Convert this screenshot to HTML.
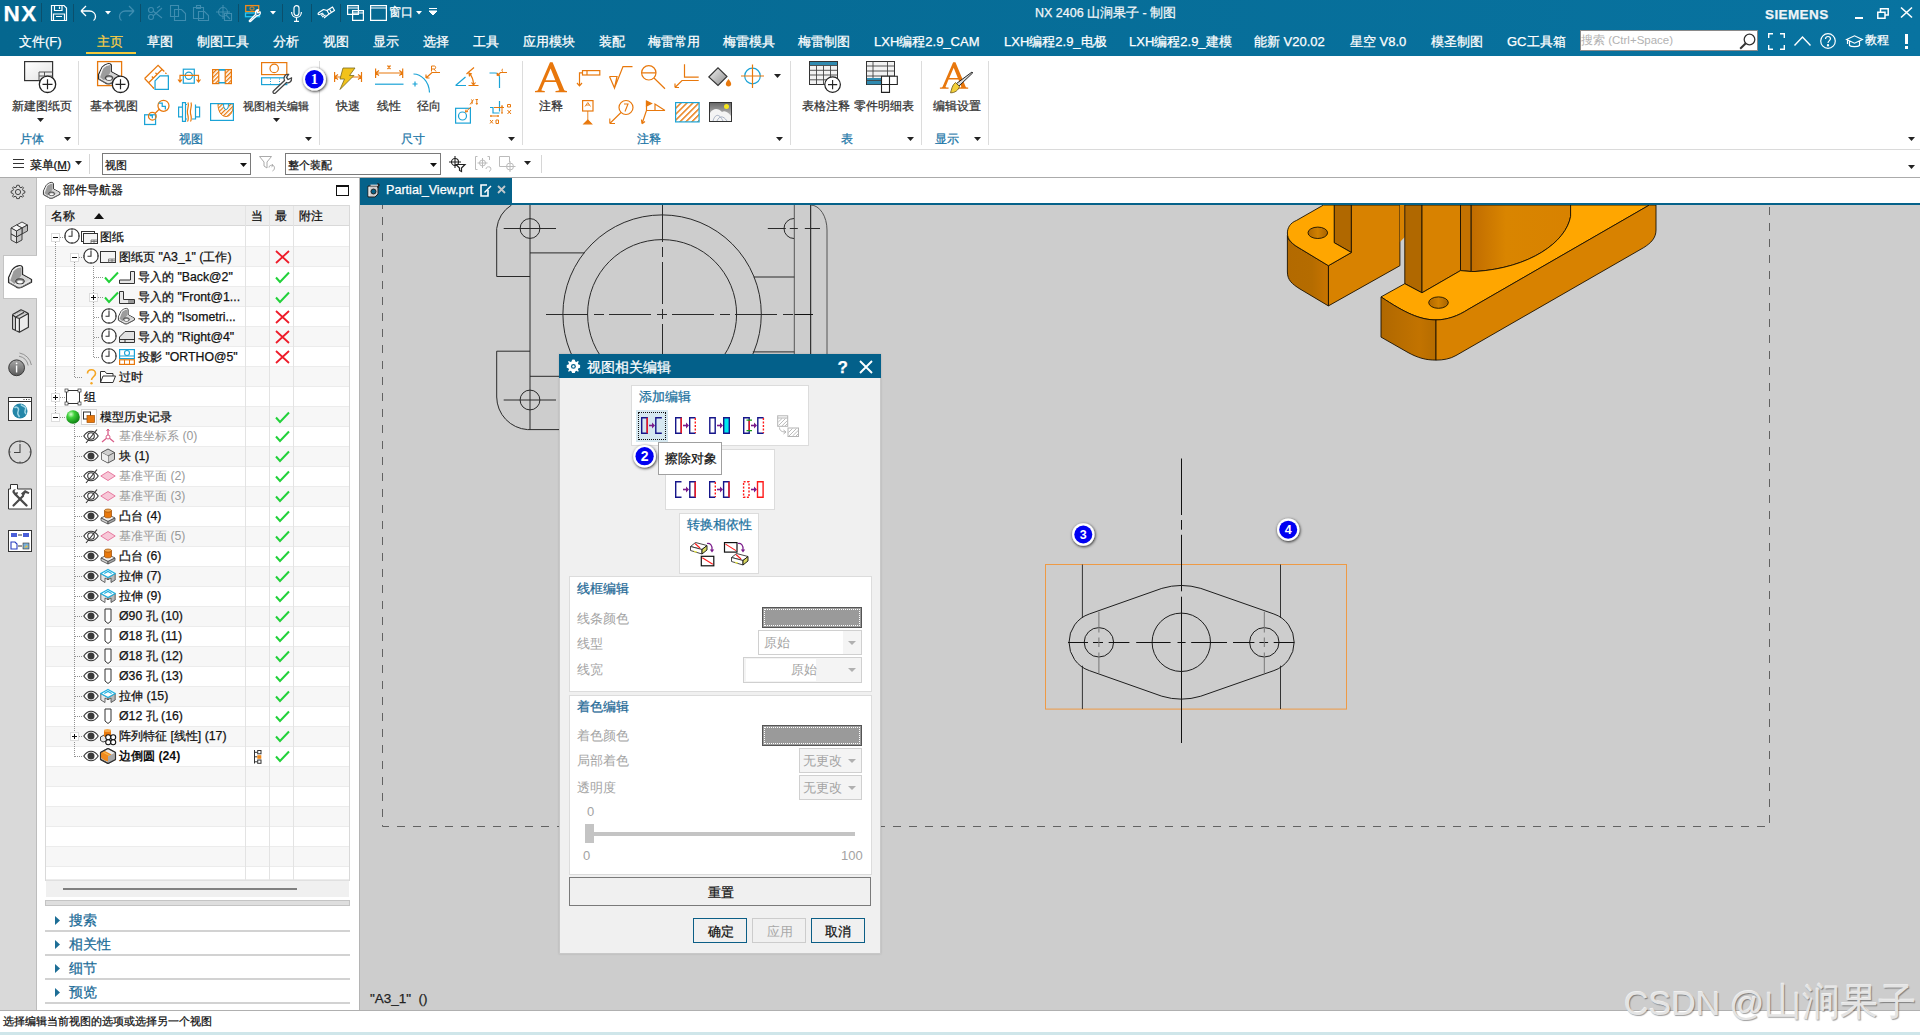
<!DOCTYPE html>
<html><head><meta charset="utf-8">
<style>
*{box-sizing:border-box;margin:0;padding:0}
html,body{width:1920px;height:1035px;overflow:hidden}
body{position:relative;font-family:"Liberation Sans",sans-serif;font-size:12px;color:#222;background:#fff;-webkit-text-stroke:0.25px currentColor}
.a{position:absolute}
.w{color:#fff}
svg{position:absolute;overflow:visible}
#hdr{left:0;top:0;width:1920px;height:56px;background:linear-gradient(90deg,#05678f,#0873a0)}
.mi{position:absolute;top:33.5px;font-size:13px;color:#fff;white-space:nowrap;line-height:16px}
#ribbon{left:0;top:56px;width:1920px;height:94px;background:#fff;border-bottom:1px solid #dadada}
.rl{position:absolute;font-size:12px;color:#333;white-space:nowrap;line-height:14px}
.gl{position:absolute;top:132px;font-size:12px;color:#1f78a8;white-space:nowrap;line-height:14px}
.sep{position:absolute;width:1px;background:#dcdcdc}
#tb{left:0;top:150px;width:1920px;height:28px;background:#fff;border-bottom:1px solid #a8a8a8}
#strip{left:0;top:178px;width:37px;height:832px;background:#d9d9d9;border-right:1px solid #bdbdbd}
#nav{left:37px;top:178px;width:323px;height:832px;background:#fff;border-right:1px solid #b4b4b4}
#gfx{left:360px;top:205px;width:1560px;height:805px;background:#cdcdcd}
#tabbar{left:360px;top:178px;width:1560px;height:27px;background:#fff;border-bottom:2px solid #05658d}
#status{left:0;top:1010px;width:1920px;height:25px;background:#fff;border-top:1px solid #b0b0b0}
.row{position:absolute;left:46px;width:304px;height:20px;border-bottom:1px solid #e8e8e8}
.row.alt{background:#f7f7f7}
.rt{position:absolute;font-size:12.3px;color:#111;white-space:nowrap;line-height:14px}
.rt.g{color:#999}
</style></head><body>

<div id="hdr" class="a">
<div class="a w" style="left:3.5px;top:1.3px;font-size:22.5px;font-weight:bold;line-height:25px;letter-spacing:1.6px">NX</div>
<div class="a" style="left:41px;top:3px;width:1px;height:19px;background:#0b4f6c"></div>
<svg style="left:51px;top:5px" width="16" height="16" viewBox="0 0 16 16"><path d="M0.5 0.5H13L15.5 3V15.5H0.5Z M3.5 0.5V5.5H11V0.5 M8.5 1.5V4 M2.5 15.5V9H13.5V15.5 M5 11.5H11" fill="none" stroke="#fff" stroke-width="1.2"/></svg>
<div class="a" style="left:73px;top:4px;width:1px;height:18px;background:#0b4f6c"></div>
<svg style="left:80px;top:5px" width="17" height="16" viewBox="0 0 17 16"><path d="M1 6L6 1 M1 6L6 11 M1 6H9.5C13 6 15.5 8.5 15.5 11.5C15.5 13 15 14.5 13.5 15.5" fill="none" stroke="#fff" stroke-width="1.3"/></svg>
<svg style="left:105px;top:11px" width="6" height="4"><path d="M0 0H6L3 3.5Z" fill="#fff"/></svg>
<svg style="left:118px;top:5px" width="17" height="16" viewBox="0 0 17 16"><path d="M16 6L11 1 M16 6L11 11 M16 6H7.5C4 6 1.5 8.5 1.5 11.5C1.5 13 2 14.5 3.5 15.5" fill="none" stroke="#3f8db0" stroke-width="1.3"/></svg>
<div class="a" style="left:140px;top:4px;width:1px;height:18px;background:#0b4f6c"></div>
<svg style="left:147px;top:5px" width="16" height="16" viewBox="0 0 16 16" fill="none" stroke="#3f8db0" stroke-width="1.1"><circle cx="4" cy="12" r="2.5"/><circle cx="4" cy="5" r="2.5"/><path d="M6 11L15 3 M6 6L15 13 M10 3L13 1"/></svg>
<svg style="left:170px;top:5px" width="16" height="16" viewBox="0 0 16 16" fill="none" stroke="#3f8db0" stroke-width="1.1"><path d="M0.5 0.5H8.5V11.5H0.5Z M4.5 4.5H11.5L15.5 8.5V15.5H4.5Z"/></svg>
<svg style="left:193px;top:5px" width="16" height="16" viewBox="0 0 16 16" fill="none" stroke="#3f8db0" stroke-width="1.1"><path d="M0.5 2.5H10.5V13.5H0.5Z M3.5 0.5H7.5V3.5H3.5Z M5.5 6.5H11.5L15.5 10.5V15.5H5.5Z"/></svg>
<svg style="left:216px;top:5px" width="16" height="16" viewBox="0 0 16 16" fill="none" stroke="#3f8db0" stroke-width="1.1"><circle cx="7" cy="7" r="4.5"/><path d="M7 0V14 M0 7H14 M8.5 8.5H15.5V15.5H8.5Z M10 10L14 14"/></svg>
<div class="a" style="left:238px;top:4px;width:1px;height:18px;background:#0b4f6c"></div>
<svg style="left:245px;top:5px" width="17" height="17" viewBox="0 0 17 17"><rect x="0.7" y="0.6" width="13" height="6" fill="none" stroke="#f08a1c" stroke-width="1.3"/><rect x="5" y="2" width="4" height="3" rx="1" fill="none" stroke="#f08a1c" stroke-width="1"/><rect x="0.5" y="8" width="14" height="3.7" fill="none" stroke="#25c8f5" stroke-width="1.3"/><path d="M4.5 15.5L11 9C10 7 11 4.5 13.5 4.8L12 6.8L13 8L15 6.8C16 9 14 11 12 10.5L5.5 16.5C4.8 17 3.8 16.3 4.5 15.5Z" fill="#07699a" stroke="#fff" stroke-width="1.3" stroke-linejoin="round"/></svg>
<svg style="left:270px;top:11px" width="6" height="4"><path d="M0 0H6L3 3.5Z" fill="#fff"/></svg>
<div class="a" style="left:282px;top:4px;width:1px;height:18px;background:#0b4f6c"></div>
<svg style="left:291px;top:5px" width="11" height="17" viewBox="0 0 11 17" fill="none" stroke="#fff" stroke-width="1.2"><rect x="3" y="0.6" width="5" height="10" rx="2.5"/><path d="M0.6 7C0.6 10 2.6 12.5 5.5 12.5C8.4 12.5 10.4 10 10.4 7 M5.5 12.5V16 M3 16.3H8"/></svg>
<div class="a" style="left:311px;top:4px;width:1px;height:18px;background:#0b4f6c"></div>
<svg style="left:317px;top:6px" width="18" height="13" viewBox="0 0 18 13" fill="none" stroke="#fff" stroke-width="1.2" stroke-linejoin="round"><path d="M10 4.5L15.5 1L17.5 4.5L12 8Z"/><path d="M12.5 3.2L14.5 6.5"/><path d="M10 4.5L6.5 3.5L2 6.5C0.5 7.5 1 9 2.5 8.5L6 7 M4 9.5L7 8 M5 11L8.5 9 M7 12L12 8"/></svg>
<div class="a" style="left:340px;top:4px;width:1px;height:18px;background:#0b4f6c"></div>
<svg style="left:347px;top:5px" width="17" height="16" viewBox="0 0 17 16" fill="none" stroke="#fff" stroke-width="1.2"><path d="M0.6 0.6H11.4V9.4H0.6Z M0.6 3H11.4 M5.6 5.6H16.4V15.4H5.6Z M5.6 8H16.4"/></svg>
<svg style="left:370px;top:5px" width="17" height="16" viewBox="0 0 17 16" fill="none" stroke="#fff" stroke-width="1.2"><path d="M0.6 0.6H16.4V15.4H0.6Z M0.6 3H16.4"/></svg>
<div class="a w" style="left:389px;top:5px;font-size:12px;line-height:15px">窗口</div>
<svg style="left:416px;top:11px" width="6" height="4"><path d="M0 0H6L3 3.5Z" fill="#fff"/></svg>
<svg style="left:429px;top:8px" width="8" height="8"><path d="M0 0.5H8 M0 3H8L4 7Z" fill="#fff" stroke="#fff" stroke-width="1"/></svg>
<div class="a w" style="left:1035px;top:5px;font-size:12.5px;line-height:16px;color:#f2f6f8">NX 2406 山涧果子 - 制图</div>
<div class="a w" style="left:1765px;top:7px;font-size:13.5px;font-weight:bold;letter-spacing:0.4px;line-height:16px;color:#eef4f7">SIEMENS</div>
<div class="a" style="left:1855px;top:17px;width:8px;height:2px;background:#fff"></div>
<svg style="left:1877px;top:8px" width="12" height="11" viewBox="0 0 12 11" fill="none" stroke="#fff" stroke-width="1.5"><path d="M0.8 4.2H8V10.2H0.8Z M3.5 4V0.8H11.2V7H8.2"/></svg>
<svg style="left:1900px;top:7px" width="13" height="11" viewBox="0 0 13 11" fill="none" stroke="#fff" stroke-width="1.6"><path d="M1 0.5L12 10.5 M12 0.5L1 10.5"/></svg>
<div class="mi" style="left:19px">文件(F)</div>
<div class="mi" style="left:97px;color:#f7cd46">主页</div>
<div class="a" style="left:86px;top:52px;width:50px;height:2px;background:#f5c93c"></div>
<div class="mi" style="left:147px">草图</div>
<div class="mi" style="left:197px">制图工具</div>
<div class="mi" style="left:273px">分析</div>
<div class="mi" style="left:323px">视图</div>
<div class="mi" style="left:373px">显示</div>
<div class="mi" style="left:423px">选择</div>
<div class="mi" style="left:473px">工具</div>
<div class="mi" style="left:523px">应用模块</div>
<div class="mi" style="left:599px">装配</div>
<div class="mi" style="left:648px">梅雷常用</div>
<div class="mi" style="left:723px">梅雷模具</div>
<div class="mi" style="left:798px">梅雷制图</div>
<div class="mi" style="left:874px">LXH编程2.9_CAM</div>
<div class="mi" style="left:1004px">LXH编程2.9_电极</div>
<div class="mi" style="left:1129px">LXH编程2.9_建模</div>
<div class="mi" style="left:1254px">能新 V20.02</div>
<div class="mi" style="left:1350px">星空 V8.0</div>
<div class="mi" style="left:1431px">模圣制图</div>
<div class="mi" style="left:1507px">GC工具箱</div>
<div class="a" style="left:1580px;top:30px;width:178px;height:21px;background:#fff;border:1px solid #8a8a8a"></div>
<div class="a" style="left:1581px;top:33px;font-size:11.5px;line-height:15px;color:#b2b2b2;-webkit-text-stroke:0">搜索 (Ctrl+Space)</div>
<svg style="left:1739px;top:33px" width="17" height="17" viewBox="0 0 17 17" fill="none" stroke="#333" stroke-width="1.3"><circle cx="10.5" cy="6.5" r="5.3"/><path d="M6.8 10.2L1.2 15.8" stroke-width="2"/></svg>
<svg style="left:1768px;top:33px" width="17" height="17" viewBox="0 0 17 17" fill="none" stroke="#fff" stroke-width="1.4"><path d="M0.7 5V0.7H5 M12 0.7H16.3V5 M16.3 12V16.3H12 M5 16.3H0.7V12"/></svg>
<svg style="left:1794px;top:36px" width="17" height="10" viewBox="0 0 17 10" fill="none" stroke="#fff" stroke-width="1.4"><path d="M0.5 9.5L8.5 1L16.5 9.5"/></svg>
<svg style="left:1820px;top:33px" width="16" height="16" viewBox="0 0 16 16" fill="none" stroke="#fff" stroke-width="1.2"><circle cx="8" cy="8" r="7.3"/><path d="M5.5 6C5.5 4.2 6.6 3.5 8 3.5C9.5 3.5 10.5 4.5 10.5 5.8C10.5 7.5 8 7.8 8 10" /><circle cx="8" cy="12.3" r="0.6" fill="#fff"/></svg>
<svg style="left:1846px;top:35px" width="17" height="13" viewBox="0 0 17 13" fill="none" stroke="#fff" stroke-width="1.2"><path d="M0.6 4.5L8.5 0.8L16.4 4.5L8.5 8.2Z M3.5 6V10.5C5 12 12 12 13.5 10.5V6 M1.5 5V9"/></svg>
<div class="a w" style="left:1865px;top:33px;font-size:12px;line-height:15px">教程</div>
<div class="a" style="left:1905px;top:34px;width:2.5px;height:10px;background:#fff"></div>
<div class="a" style="left:1905px;top:46px;width:2.5px;height:2.5px;background:#fff"></div>
</div>
<div id="ribbon" class="a"></div>
<div class="sep" style="left:78px;top:61px;height:84px"></div>
<div class="sep" style="left:319px;top:61px;height:84px"></div>
<div class="sep" style="left:522px;top:61px;height:84px"></div>
<div class="sep" style="left:790px;top:61px;height:84px"></div>
<div class="sep" style="left:921px;top:61px;height:84px"></div>
<div class="sep" style="left:988px;top:61px;height:84px"></div>
<svg style="left:24px;top:61px" width="34" height="33" viewBox="0 0 34 33"><defs><linearGradient id="gsh" x1="0" y1="0" x2="1" y2="1"><stop offset="0" stop-color="#fff"/><stop offset="1" stop-color="#e2e2e2"/></linearGradient></defs><rect x="0.6" y="0.6" width="28" height="19" fill="url(#gsh)" stroke="#333" stroke-width="1.2"/><path d="M15 19.6V11H28.6 M15 15H28.6 M20.5 11V15" fill="none" stroke="#555" stroke-width="1"/><circle cx="23.5" cy="23.3" r="8.2" fill="#fff" stroke="#222" stroke-width="1.3"/><path d="M23.5 18.3V28.3 M18.5 23.3H28.5" stroke="#222" stroke-width="1.2"/></svg>
<div class="rl" style="left:12px;top:98.5px;font-size:11.7px">新建图纸页</div>
<svg style="left:37px;top:118px" width="7" height="4"><path d="M0 0H7L3.5 4Z" fill="#222"/></svg>

<div class="gl" style="left:20px">片体</div>
<svg style="left:64px;top:137px" width="7" height="4"><path d="M0 0H7L3.5 4Z" fill="#222"/></svg>

<svg style="left:97px;top:61px" width="34" height="33" viewBox="0 0 34 33"><rect x="0.6" y="0.6" width="24" height="24" fill="none" stroke="#e8780c" stroke-width="1.3"/></svg><svg style="left:98px;top:63px" width="23.0" height="22.1" viewBox="0 0 23.0 22.1"><g transform="scale(0.92)"><path d="M0.6 17.5V12.5L4.3 4.8C6 2.5 9 1 11.3 0.6C13 0.4 14.5 1.2 14.5 2.5V9.6L23.5 14.5V17.2L13.3 22.5C11 23.2 9 22.7 7.7 21.5Z" fill="#e6e6e6" stroke="#2a2a2a" stroke-width="1.3" stroke-linejoin="round"/>
<path d="M2.3 15.5L5.5 6.3C7.2 4 10 2.4 13.3 2.2V10.8L6.5 19Z" fill="#9c9c9c"/>
<path d="M1.8 13.5L5 5.6C7 3.3 9.8 1.9 12.8 1.7" stroke="#f7f7f7" stroke-width="1.1" fill="none"/>
<path d="M14.5 10L22.5 14.6L14 19.5L8 17.5Z" fill="#d4d4d4"/>
<path d="M1 17.8L7.7 21.3C9.5 22.4 11.5 22.6 13.3 22.1L23 17" stroke="#777" stroke-width="0.9" fill="none"/>
<ellipse cx="12" cy="16.3" rx="4.3" ry="2.5" fill="#8a8a8a" stroke="#333" stroke-width="1"/>
<ellipse cx="12" cy="17" rx="2.9" ry="1.4" fill="#fafafa"/></g></svg><svg style="left:97px;top:61px" width="34" height="33" viewBox="0 0 34 33"><circle cx="23.5" cy="23.3" r="8.2" fill="#fff" stroke="#222" stroke-width="1.3"/><path d="M23.5 18.3V28.3 M18.5 23.3H28.5" stroke="#222" stroke-width="1.2"/></svg>
<div class="rl" style="left:90px;top:98.5px;font-size:11.7px">基本视图</div>
<svg style="left:144px;top:65px" width="25" height="25" viewBox="0 0 24 24" fill="none" stroke-width="1.2"><path d="M0.6 13L13.5 0.3L19.5 6.3 M4.5 17L17 4.5 M7.5 11L9 12.5 M11 7.5L12.5 9 M0.6 13L9.5 22.5" stroke="#e8780c"/><path d="M20.5 7.5L23 10 M9.5 22.5L8 21" stroke="#e8780c" stroke-dasharray="1.5 1.5"/><path d="M10.6 15.2L15.4 10.4H23.4V23.3H10.6Z" stroke="#1ba3d6"/></svg>
<svg style="left:179px;top:68px" width="22" height="16" viewBox="0 0 22 16" fill="none" stroke-width="1.2"><rect x="4.3" y="1.2" width="11" height="14" stroke="#1ba3d6"/><circle cx="9.8" cy="7.8" r="3.6" stroke="#1ba3d6"/><path d="M1 14V7.4H19.5V14 M-1 11.5L1 14L3 11.5 M17.5 11.5L19.5 14L21.5 11.5" stroke="#e8780c"/></svg>
<svg style="left:212px;top:69px" width="20" height="15" viewBox="0 0 20 15"><defs><pattern id="hat1" width="3" height="3" patternUnits="userSpaceOnUse" patternTransform="rotate(45)"><rect width="3" height="3" fill="#fff"/><rect width="1.3" height="3" fill="#e8780c"/></pattern></defs><rect x="0.6" y="0.6" width="6.2" height="14" fill="url(#hat1)" stroke="#e8780c" stroke-width="1.2"/><rect x="13.2" y="0.6" width="6.2" height="14" fill="url(#hat1)" stroke="#e8780c" stroke-width="1.2"/><path d="M6.8 0.9H13.2 M6.8 13.8H13.2" stroke="#1ba3d6" stroke-width="1.6"/></svg>
<svg style="left:144px;top:100px" width="25" height="25" viewBox="0 0 24 24" fill="none" stroke-width="1.2"><rect x="0.6" y="14.2" width="10.5" height="9.3" stroke="#1ba3d6"/><circle cx="8" cy="15.5" r="3.7" stroke="#e8780c"/><circle cx="18.7" cy="5.6" r="5.3" stroke="#e8780c"/><path d="M10.5 13L15 8.5" stroke="#e8780c"/><path d="M14 3H17.5V6H20.5V9" stroke="#1ba3d6"/><path d="M5.5 15H8V17.5" stroke="#1ba3d6"/></svg>
<svg style="left:178px;top:102px" width="23" height="20" viewBox="0 0 23 20" fill="none" stroke-width="1.2"><path d="M0.6 5.2H4.5V14.8H0.6Z M4.5 0.6H7.5V19.4H4.5Z M7.5 2.5H9 M7.5 17H9 M21.6 5.2H17.5V14.8H21.6Z M17.5 2.5V17H14" stroke="#1ba3d6"/><path d="M10 0.5C11.5 4 8.5 8 9.5 11.5C10.5 15 11 17 9.5 19.5 M13 0.5C14.5 4 11.5 8 12.5 11.5C13.5 15 14 17 12.5 19.5" stroke="#e8780c"/></svg>
<svg style="left:210px;top:103px" width="24" height="18" viewBox="0 0 24 18"><defs><pattern id="hat2" width="3" height="3" patternUnits="userSpaceOnUse" patternTransform="rotate(45)"><rect width="3" height="3" fill="#fff"/><rect width="1.2" height="3" fill="#e8780c"/></pattern></defs><path d="M8 0.8C8 8 11 13.5 16 13.5C21 13.5 23.3 8 23.3 0.8Z" fill="url(#hat2)" stroke="#e8780c" stroke-width="1"/><path d="M13.5 0.8C13.5 4.5 14.5 6.5 16 6.5C17.5 6.5 18.5 4.5 18.5 0.8Z" fill="#fff" stroke="#1ba3d6" stroke-width="1"/><rect x="0.6" y="0.6" width="22.8" height="16.8" fill="none" stroke="#1ba3d6" stroke-width="1.2"/></svg>
<svg style="left:261px;top:62px" width="32" height="32" viewBox="0 0 32 32" fill="none"><rect x="0.6" y="0.6" width="25.2" height="12" stroke="#e8780c" stroke-width="1.2"/><circle cx="13.2" cy="6.4" r="4.2" stroke="#e8780c" stroke-width="1.2"/><rect x="0.6" y="15.8" width="25.2" height="6.8" stroke="#1ba3d6" stroke-width="1.2"/><path d="M9.5 16.5V22 M18.5 16.5V22" stroke="#1ba3d6" stroke-width="1" stroke-dasharray="1 1.5"/><path d="M12.5 29L23.5 18.5C22 15.5 24 12 27.5 12.5L25.5 15.5L27 17.5L30.5 16C31 19.5 28 21.5 25.5 20.5L14.5 31C13 32 11 30.5 12.5 29Z" fill="#fff" stroke="#444" stroke-width="1.3"/></svg>
<div class="rl" style="left:242.5px;top:98.5px;font-size:11.4px">视图相关编辑</div>
<svg style="left:273px;top:118px" width="7" height="4"><path d="M0 0H7L3.5 4Z" fill="#222"/></svg>

<div class="gl" style="left:179px">视图</div>
<svg style="left:305px;top:137px" width="7" height="4"><path d="M0 0H7L3.5 4Z" fill="#222"/></svg>

<svg style="left:334px;top:67px" width="29" height="23" viewBox="0 0 29 23" fill="none" stroke="#e8780c" stroke-width="1.2"><path d="M0.6 5V15 M27.5 5V15 M0.6 10H27.5 M0.6 10L4 7.5 M0.6 10L4 12.5 M27.5 10L24 7.5 M27.5 10L24 12.5"/><path d="M9 1H21L15.5 8.5H20L6 22.5L10.5 12H6Z" fill="#f2c21a" stroke="#7a6a20" stroke-width="0.8"/></svg>
<div class="rl" style="left:336px;top:98.5px;font-size:11.7px">快速</div>
<svg style="left:375px;top:68px" width="29" height="17" viewBox="0 0 29 17" fill="none" stroke-width="1.2"><path d="M0.6 0.5V10 M27.7 0.5V10 M0.6 5H27.7 M0.6 5L4 2.5 M0.6 5L4 7.5 M27.7 5L24.3 2.5 M27.7 5L24.3 7.5 M12.5 -2.5L15.5 1 M15.5 -2.5L12.5 1" stroke="#e8780c"/><path d="M0 16.2H28.5" stroke="#1ba3d6"/></svg>
<div class="rl" style="left:377px;top:98.5px;font-size:11.7px">线性</div>
<svg style="left:413px;top:67px" width="29" height="26" viewBox="0 0 29 26" fill="none" stroke-width="1.2"><path d="M0.5 7C8 7 16 14 16.5 25.5 M2 14.5V19.5 M-0.5 17H4.5" stroke="#1ba3d6"/><path d="M13 11L19 5.5H27 M13 11H16.5 M13 11V7.5" stroke="#e8780c"/><path d="M18.5 4.5V-1H21.5C23 -1 23 2 21.5 2H18.5 M21 2L23 4.5" stroke="#e8780c" stroke-width="1"/></svg>
<div class="rl" style="left:417px;top:98.5px;font-size:11.7px">径向</div>
<svg style="left:455px;top:67px" width="25" height="20" viewBox="0 0 25 20" fill="none" stroke-width="1.2"><path d="M0.6 18.5L10.5 10 M0.6 18.5H11" stroke="#1ba3d6"/><path d="M13.5 18.5H23.5 M11.5 7L19 0.5 M14 6C17 9 18.5 12 18.5 18 M14 6L14.5 9.5 M14 6L17 7 M18.5 18L16.5 15.5 M18.5 18L20.5 15.5" stroke="#e8780c"/></svg>
<svg style="left:489px;top:69px" width="20" height="20" viewBox="0 0 20 20" fill="none" stroke-width="1.2"><path d="M0.5 4H6C8.5 4 10.5 6 10.5 8.5V19" stroke="#1ba3d6"/><path d="M8 6.5L11.5 3.5H18 M8 6.5L11 6.2 M8 6.5L8.5 3.8" stroke="#e8780c"/><path d="M14 2.5C12.5 2.5 12.5 0 14 0" stroke="#e8780c" stroke-width="0.9"/></svg>
<svg style="left:455px;top:99px" width="25" height="26" viewBox="0 0 25 26" fill="none" stroke-width="1.2"><rect x="0.6" y="9.3" width="14.8" height="14.8" stroke="#1ba3d6"/><circle cx="7.5" cy="17" r="4" stroke="#1ba3d6"/><path d="M10.5 13L16 8 M10.5 13L11 10.5 M10.5 13L13 12.5 M15 5.5L18.5 0.5 M16 0.5C17.5 0.5 18 5 16.5 5 M20.5 0.5H23 M21.8 0.5V5 M21 4L21.8 5.5L22.5 4" stroke="#e8780c" stroke-width="1"/></svg>
<svg style="left:489px;top:101px" width="24" height="24" viewBox="0 0 24 24" fill="none" stroke-width="1.2"><path d="M10.5 0V10.5 M1 6.5H4V12H10.5" stroke="#1ba3d6"/><path d="M5 6.5H15 M13 5V12 M12 5H14 M12 12H14 M1 15H10 M2 14V16 M9 14V16 M1 19L4 22.5 M4 19L1 22.5 M7 19H9.5V22.5H7Z M18.5 3.5H21.5V6H18.5Z M18.5 9L22 13 M22 9L18.5 13" stroke="#e8780c" stroke-width="1"/></svg>
<div class="gl" style="left:401px">尺寸</div>
<svg style="left:508px;top:137px" width="7" height="4"><path d="M0 0H7L3.5 4Z" fill="#222"/></svg>

<svg style="left:530px;top:58px" width="42" height="38" viewBox="530 58 42 38"><path transform="translate(551.3 62)" d="M-1.3 0.2H1.3L13 28.2Q13.8 29 15.7 29V30.2H4.2V29Q7.2 29 8 28.2L4.7 19.9H-6.5L-10 28.2Q-9.4 29 -6.5 29V30.2H-16.3V29Q-14.2 29 -13.4 28.2Z M-0.7 6.4L-5.7 18.2H4Z" fill="#e8770c" fill-rule="evenodd"/></svg>
<div class="rl" style="left:539px;top:98.5px;font-size:11.7px">注释</div>
<svg style="left:576px;top:70px" width="25" height="17" viewBox="0 0 25 17" fill="none" stroke="#e8780c" stroke-width="1.2"><rect x="6.5" y="0.6" width="17.3" height="4.4"/><path d="M11 0.6V5 M6.5 2.8H3.5V15.5 M1 13L3.5 15.8L6 13"/></svg>
<svg style="left:609px;top:66px" width="24" height="23" viewBox="0 0 24 23" fill="none" stroke="#e8780c" stroke-width="1.2"><path d="M0.5 10.5H8L5.5 22L0.5 10.5 M5.5 22L14 0.6H23.5"/></svg>
<svg style="left:641px;top:65px" width="25" height="25" viewBox="0 0 25 25" fill="none" stroke="#e8780c" stroke-width="1.2"><circle cx="7.8" cy="7.8" r="7.2"/><path d="M0.6 7.8H15 M13 13L24 23.8"/></svg>
<svg style="left:674px;top:64px" width="26" height="26" viewBox="0 0 26 26" fill="none" stroke="#e8780c" stroke-width="1.2"><path d="M10.5 0.3V13.2H24.7 M24.7 16.5H8L1 23.5 M1 23.5V19.5 M1 23.5H5"/></svg>
<svg style="left:708px;top:67px" width="24" height="20" viewBox="0 0 24 20"><defs><linearGradient id="gbk" x1="0" y1="0" x2="1" y2="1"><stop offset="0" stop-color="#f4f4f4"/><stop offset="1" stop-color="#8a8a8a"/></linearGradient></defs><path d="M0.8 10L10 0.8L19 9.5L10 18.5Z" fill="url(#gbk)" stroke="#333" stroke-width="1.1"/><path d="M20.5 12C22.5 14.5 23.2 16 23.2 17C23.2 18.5 22 19.5 20.5 19.5C19 19.5 17.8 18.5 17.8 17C17.8 16 18.5 14.5 20.5 12Z" fill="#e8780c"/></svg>
<svg style="left:741px;top:64px" width="24" height="25" viewBox="0 0 24 25" fill="none" stroke-width="1.2"><circle cx="11.5" cy="12" r="7.8" stroke="#1ba3d6"/><path d="M11.5 0.5V24 M0 12H23 M11.5 10V14 M9.5 12H13.5" stroke="#e8780c"/></svg>
<svg style="left:774px;top:74px" width="7" height="4"><path d="M0 0H7L3.5 4Z" fill="#222"/></svg>

<svg style="left:582px;top:100px" width="12" height="25" viewBox="0 0 12 25" fill="none" stroke="#e8780c" stroke-width="1.2"><rect x="0.6" y="0.6" width="10.4" height="10.4"/><path d="M5.8 11V22 M3 6.5L5.8 2.5L8.5 6.5 M4 5H7.5" stroke-width="0.9"/><path d="M2 23.8H9.5L5.8 20Z" fill="#e8780c"/></svg>
<svg style="left:609px;top:100px" width="25" height="25" viewBox="0 0 25 25" fill="none" stroke="#e8780c" stroke-width="1.2"><circle cx="17" cy="7.5" r="7"/><path d="M12 12.5L0.8 23.5 M0.8 23.5V18.5 M0.8 23.5H6 M15 4H19L16 11.5" stroke-width="1.1"/></svg>
<svg style="left:641px;top:100px" width="25" height="25" viewBox="0 0 25 25" fill="none" stroke="#e8780c" stroke-width="1.2"><path d="M5.5 1V10.5L1 23.8 M1 23.8L0.5 19.5 M1 23.8L4 21.5 M5.5 10.5H24 M14 10.5V4L24 10.5"/><path d="M5.5 1L10.5 3.5L5.5 6Z" fill="#e8780c"/></svg>
<svg style="left:675px;top:102px" width="25" height="21" viewBox="0 0 25 21"><defs><pattern id="hat3" width="4.2" height="4.2" patternUnits="userSpaceOnUse" patternTransform="rotate(45)"><rect width="4.2" height="4.2" fill="#fff"/><rect width="1.4" height="4.2" fill="#e8780c"/></pattern></defs><rect x="0.6" y="0.6" width="23.5" height="19.3" fill="url(#hat3)" stroke="#1ba3d6" stroke-width="1.2"/></svg>
<svg style="left:709px;top:102px" width="23" height="20" viewBox="0 0 23 20"><defs><linearGradient id="gim" x1="0" y1="0" x2="0" y2="1"><stop offset="0" stop-color="#666"/><stop offset="1" stop-color="#ddd"/></linearGradient></defs><rect x="0.5" y="0.5" width="22" height="19" fill="url(#gim)" stroke="#333" stroke-width="1"/><path d="M1 19V11C5 5 10 7 13 10C16 8 20 11 22 14V19Z" fill="#f4f4f4"/><path d="M4 19C6 12 10 11 14 19 M8 19C10 14 14 13 18 19" fill="none" stroke="#8a98b0" stroke-width="0.7"/><circle cx="17.5" cy="4.5" r="2.5" fill="#f5e51c"/></svg>
<div class="gl" style="left:637px">注释</div>
<svg style="left:776px;top:137px" width="7" height="4"><path d="M0 0H7L3.5 4Z" fill="#222"/></svg>

<svg style="left:809px;top:61px" width="34" height="33" viewBox="0 0 34 33"><rect x="0.5" y="0.5" width="28" height="23" fill="#f2f2f2" stroke="#333" stroke-width="1"/><rect x="1" y="1" width="27" height="3.3" fill="#2f8ab0"/><path d="M0.5 4.5H28.5 M0.5 9.3H28.5 M0.5 14H28.5 M0.5 18.8H28.5 M7.5 4.5V23.5 M14.5 4.5V23.5 M21.5 4.5V23.5" stroke="#444" stroke-width="0.9"/><circle cx="23.6" cy="23.6" r="7.8" fill="#fff" stroke="#222" stroke-width="1.2"/><path d="M23.6 19V28.2 M19 23.6H28.2" stroke="#222" stroke-width="1.1"/></svg>
<div class="rl" style="left:802px;top:98.5px;font-size:11.7px">表格注释</div>
<svg style="left:866px;top:61px" width="32" height="32" viewBox="0 0 32 32"><rect x="0.5" y="0.5" width="28" height="23" fill="#f2f2f2" stroke="#333" stroke-width="1"/><rect x="1" y="17" width="15" height="6.3" fill="#2f8ab0"/><path d="M0.5 5H28.5 M0.5 10H28.5 M0.5 15H28.5 M0.5 19.5H16 M7 0.5V17 M21.5 0.5V15" stroke="#444" stroke-width="0.9"/><path d="M15.5 15.3H31.3V23.5H23.5V31.4H15.5Z M23.5 15.3V23.5H15.5" fill="#fff" stroke="#222" stroke-width="1.1"/></svg>
<div class="rl" style="left:854px;top:98.5px;font-size:11.7px">零件明细表</div>
<div class="gl" style="left:841px">表</div>
<svg style="left:907px;top:137px" width="7" height="4"><path d="M0 0H7L3.5 4Z" fill="#222"/></svg>

<svg style="left:935px;top:58px" width="40" height="36" viewBox="935 58 40 36"><path transform="translate(954.3 62) scale(0.883)" d="M-1.3 0.2H1.3L13 28.2Q13.8 29 15.7 29V30.2H4.2V29Q7.2 29 8 28.2L4.7 19.9H-6.5L-10 28.2Q-9.4 29 -6.5 29V30.2H-16.3V29Q-14.2 29 -13.4 28.2Z M-0.7 6.4L-5.7 18.2H4Z" fill="#e8770c" fill-rule="evenodd"/></svg>
<svg style="left:945px;top:70px" width="30" height="25" viewBox="945 70 30 25"><path d="M956.5 83.5L972 72L972.8 72.8L959 86Z" fill="#d8d8d8" stroke="#111" stroke-width="0.9"/><path d="M955.5 82.5L959.5 86.5C958.5 90 955 93 950.5 92.8C951.5 90 952 85 955.5 82.5Z" fill="#f2cf3a" stroke="#6a5418" stroke-width="0.8"/></svg>
<div class="rl" style="left:933px;top:98.5px;font-size:11.7px">编辑设置</div>
<div class="gl" style="left:935px">显示</div>
<svg style="left:974px;top:137px" width="7" height="4"><path d="M0 0H7L3.5 4Z" fill="#222"/></svg>

<svg style="left:1908px;top:137px" width="7" height="4"><path d="M0 0H7L3.5 4Z" fill="#222"/></svg>

<svg style="left:301px;top:65px" width="28" height="28" viewBox="0 0 28 28"><defs><filter id="bsh" x="-40%" y="-40%" width="180%" height="180%"><feDropShadow dx="0.6" dy="0.9" stdDeviation="1.4" flood-color="#000" flood-opacity="0.9"/></filter></defs><circle cx="13.5" cy="14.2" r="11.4" fill="#fff" filter="url(#bsh)"/><circle cx="13.3" cy="14.2" r="9.2" fill="#0000f2"/><text x="13.3" y="19" font-family="Liberation Serif" font-weight="bold" font-size="14.5" fill="#fff" text-anchor="middle">1</text></svg>
<div id="tb" class="a"></div>
<div class="a" style="left:0;top:177px;width:1920px;height:1px;background:#ababab"></div>
<svg style="left:13px;top:159px" width="11" height="10" viewBox="0 0 11 10"><path d="M0 0.5H11 M0 4.5H11 M0 8.5H11" stroke="#333" stroke-width="1.1"/></svg>
<div class="a" style="left:29.5px;top:157.5px;font-size:11.5px;line-height:14px;color:#111">菜单(<span style="text-decoration:underline">M</span>)</div>
<svg style="left:75px;top:161px" width="7" height="4"><path d="M0 0H7L3.5 4Z" fill="#222"/></svg>
<div class="a" style="left:89px;top:154px;width:1px;height:20px;background:#d6d6d6"></div>
<div class="a" style="left:102px;top:153px;width:149px;height:22px;border:1px solid #7a7a7a;background:#fff"></div>
<div class="a" style="left:104.5px;top:158px;font-size:11px;line-height:14px;color:#111">视图</div>
<svg style="left:240px;top:163px" width="7" height="4"><path d="M0 0H7L3.5 4Z" fill="#111"/></svg>
<svg style="left:259px;top:156px" width="17" height="16" viewBox="0 0 17 16"><path d="M0.5 0.5H12.5L8 6V12L5 10V6Z" fill="none" stroke="#aaa" stroke-width="1"/><path d="M10 11.5C10 9.5 12 9 14 9.5L13 8 M14 9.5L12.5 10.8 M14 9.5C16 10 16 14 13.5 15" fill="none" stroke="#aaa" stroke-width="1"/></svg>
<div class="a" style="left:285px;top:153px;width:156px;height:22px;border:1px solid #7a7a7a;background:#fff"></div>
<div class="a" style="left:287.5px;top:158px;font-size:11px;line-height:14px;color:#111">整个装配</div>
<svg style="left:430px;top:163px" width="7" height="4"><path d="M0 0H7L3.5 4Z" fill="#111"/></svg>
<svg style="left:449px;top:156px" width="17" height="16" viewBox="0 0 17 16"><circle cx="6" cy="6" r="3.5" fill="none" stroke="#222" stroke-width="1.1"/><path d="M6 0V12 M0 6H12" stroke="#222" stroke-width="1.1"/><path d="M7 8.5H16L12.5 12V15.5L10.5 14.5V12Z" fill="#fff" stroke="#222" stroke-width="1.2"/></svg>
<svg style="left:475px;top:156px" width="17" height="16" viewBox="0 0 17 16"><path d="M2.5 0.5H0.5V13.5H2.5 M12.5 0.5H14.5V4" fill="none" stroke="#bbb"/><circle cx="7.5" cy="7" r="3" fill="none" stroke="#bbb"/><path d="M7.5 2V12 M2.5 7H12.5 M11 13C11 11 13 10.5 15 11 M15 11C16.5 12 16 15 14 15.5" fill="none" stroke="#bbb"/></svg>
<svg style="left:499px;top:156px" width="17" height="16" viewBox="0 0 17 16"><path d="M0.5 0.5H10.5V6 M6 10.5H0.5V0.5" fill="none" stroke="#bbb"/><circle cx="11" cy="10.5" r="3.5" fill="none" stroke="#bbb"/><path d="M11 5V16 M5.5 10.5H16.5" stroke="#bbb"/></svg>
<svg style="left:524px;top:161px" width="7" height="4"><path d="M0 0H7L3.5 4Z" fill="#222"/></svg>
<div class="a" style="left:541px;top:155px;width:1px;height:18px;background:#d6d6d6"></div>
<svg style="left:1908px;top:165px" width="7" height="4"><path d="M0 0H7L3.5 4Z" fill="#222"/></svg>
<div id="strip" class="a"></div>
<div class="a" style="left:3px;top:255px;width:35px;height:44px;background:#fff;border:1px solid #c4c4c4;border-right:none"></div>
<svg style="left:10px;top:184px" width="16" height="16" viewBox="0 0 16 16"><path d="M8 1.2L9.3 1.4L9.7 3.2L11 3.8L12.5 2.8L13.5 3.8L12.5 5.3L13.1 6.6L14.8 7V9L13.1 9.4L12.5 10.7L13.5 12.2L12.5 13.2L11 12.2L9.7 12.8L9.3 14.6H6.7L6.3 12.8L5 12.2L3.5 13.2L2.5 12.2L3.5 10.7L2.9 9.4L1.2 9V7L2.9 6.6L3.5 5.3L2.5 3.8L3.5 2.8L5 3.8L6.3 3.2L6.7 1.4Z" fill="none" stroke="#444" stroke-width="1"/><circle cx="8" cy="8" r="2.6" fill="none" stroke="#444" stroke-width="1"/></svg>
<svg style="left:10px;top:221px" width="19" height="23" viewBox="0 0 19 23"><g stroke="#333" stroke-width="0.9" stroke-linejoin="round"><path d="M6.5 4L12 1L17.5 4L12 7Z" fill="#f2f2f2"/><path d="M12 7L17.5 4V10L12 13Z" fill="#bdbdbd"/><path d="M1 7L6.5 4L12 7L6.5 10Z" fill="#f7f7f7"/><path d="M1 7L6.5 10V16L1 13Z" fill="#e2e2e2"/><path d="M6.5 10L12 7V13L6.5 16Z" fill="#c4c4c4"/><path d="M1 13L6.5 16V22L1 19Z" fill="#e2e2e2"/><path d="M6.5 16L12 13V19L6.5 22Z" fill="#c4c4c4"/></g></svg>
<svg style="left:8px;top:265px" width="25.0" height="24.0" viewBox="0 0 25.0 24.0"><g transform="scale(1.0)"><path d="M0.6 17.5V12.5L4.3 4.8C6 2.5 9 1 11.3 0.6C13 0.4 14.5 1.2 14.5 2.5V9.6L23.5 14.5V17.2L13.3 22.5C11 23.2 9 22.7 7.7 21.5Z" fill="#e6e6e6" stroke="#2a2a2a" stroke-width="1.3" stroke-linejoin="round"/>
<path d="M2.3 15.5L5.5 6.3C7.2 4 10 2.4 13.3 2.2V10.8L6.5 19Z" fill="#9c9c9c"/>
<path d="M1.8 13.5L5 5.6C7 3.3 9.8 1.9 12.8 1.7" stroke="#f7f7f7" stroke-width="1.1" fill="none"/>
<path d="M14.5 10L22.5 14.6L14 19.5L8 17.5Z" fill="#d4d4d4"/>
<path d="M1 17.8L7.7 21.3C9.5 22.4 11.5 22.6 13.3 22.1L23 17" stroke="#777" stroke-width="0.9" fill="none"/>
<ellipse cx="12" cy="16.3" rx="4.3" ry="2.5" fill="#8a8a8a" stroke="#333" stroke-width="1"/>
<ellipse cx="12" cy="17" rx="2.9" ry="1.4" fill="#fafafa"/></g></svg>
<svg style="left:12px;top:309px" width="17" height="24" viewBox="0 0 17 24"><path d="M0.6 5.6V20L7.4 23.3L16.4 18.3V4.5L7.4 9.5L3.4 8.2Z" fill="#ececec"/><path d="M0.6 5.6L9 0.8L13.3 2.8L16.4 4.5 M0.6 5.6V20L7.4 23.3L16.4 18.3V4.5L7.4 9.5L3.4 8.2L0.6 5.6 M3.4 8.2V21.6 M7.4 9.5V23.3 M3.4 8.2L12 3.2" fill="none" stroke="#333" stroke-width="1.2" stroke-linejoin="round"/><path d="M3 5L11 1.5 M6 7L14 3.5" stroke="#666" stroke-width="0.8" stroke-dasharray="1 1"/></svg>
<svg style="left:7px;top:352px" width="26" height="25" viewBox="0 0 26 25"><defs><linearGradient id="ginf" x1="0" y1="0" x2="0" y2="1"><stop offset="0" stop-color="#a8a8a8"/><stop offset="1" stop-color="#5a5a5a"/></linearGradient></defs><circle cx="9.6" cy="15.8" r="7.9" fill="url(#ginf)" stroke="#3a3a3a" stroke-width="1"/><path d="M9.6 13.5V20.5" stroke="#fff" stroke-width="1.4"/><circle cx="9.6" cy="11.3" r="0.9" fill="#fff"/><path d="M12 4.2A11.6 11.6 0 0 1 21.2 13.5 M12.5 1A14.8 14.8 0 0 1 24.4 13" fill="none" stroke="#8a8a8a" stroke-width="0.9"/></svg>
<svg style="left:8px;top:397px" width="24" height="24" viewBox="0 0 24 24"><rect x="0.5" y="0.5" width="23" height="23" fill="#fff" stroke="#333" stroke-width="1"/><path d="M0.5 4.5H23.5" stroke="#333"/><path d="M15.5 2.5H16.5 M18 2.5H19 M20.5 2.5H21.5" stroke="#333"/><circle cx="12" cy="14" r="7.5" fill="#2486a8"/><path d="M6.5 11C8 9.5 10 10 10.5 12C11 14 9 15 10 17.5L11.5 20 M13 7.5C14 9 16 9 17.5 10.5C18.5 12 16.5 13 17 15.5L18 17" fill="none" stroke="#9fd6e6" stroke-width="1.5"/></svg>
<svg style="left:8px;top:440px" width="24" height="24" viewBox="0 0 24 24"><circle cx="12" cy="12" r="11" fill="none" stroke="#444" stroke-width="1.1"/><path d="M12 4V12.5H6 M12 0.8V2.5 M12 21.5V23.2 M0.8 12H2.5 M21.5 12H23.2" fill="none" stroke="#444" stroke-width="1.1"/></svg>
<svg style="left:8px;top:484px" width="25" height="26" viewBox="0 0 25 26"><path d="M0.5 5H2.5V0.5H9.5V5H23.5V25H0.5Z" fill="#fff" stroke="#333" stroke-width="1"/><path d="M8 11L18.5 21.5" stroke="#4a4a4a" stroke-width="2.4" stroke-linecap="round"/><path d="M4.5 8.5C4 6.5 5.5 4.8 7.8 5.2L6.5 7L7.5 8.8L9.8 8C10.3 10 8.5 12 6.5 11.3Z" fill="#4a4a4a"/><path d="M5.5 21.5L15 12" stroke="#4a4a4a" stroke-width="2.2" stroke-linecap="round"/><path d="M13 9.5L17 6L21.5 8.5L20.5 10L17.5 9L15.5 12.5Z" fill="#4a4a4a"/></svg>
<svg style="left:8px;top:530px" width="24" height="22" viewBox="0 0 24 22"><rect x="0.5" y="0.5" width="23" height="21" fill="#fff" stroke="#333" stroke-width="1"/><rect x="3" y="3" width="6" height="4" fill="#4a5fd8"/><rect x="15" y="3" width="6" height="4" fill="#4a5fd8"/><path d="M10 5H14 M10 16H14" stroke="#333"/><path d="M3 12H7L9 14V19H3Z" fill="#fff" stroke="#2a3fc0" stroke-width="1.1"/><rect x="15" y="13" width="6" height="6" fill="#7ab0d8" stroke="#333" stroke-width="0.6"/><path d="M16 18L18.5 15L20 17" fill="#e8c040"/></svg>
<div id="nav" class="a"></div>
<div class="a" style="left:45px;top:205px;width:305px;height:676px;border:1px solid #d9d9d9;background:#fff"></div>
<div class="a" style="left:46px;top:206px;width:303px;height:20px;background:#efefef;border-bottom:1px solid #d9d9d9"></div>
<div class="a" style="left:46px;top:227px;width:303px;height:20px;background:#fff;border-bottom:1px solid #ececec"></div>
<div class="a" style="left:46px;top:247px;width:303px;height:20px;background:#f7f7f7;border-bottom:1px solid #ececec"></div>
<div class="a" style="left:46px;top:267px;width:303px;height:20px;background:#fff;border-bottom:1px solid #ececec"></div>
<div class="a" style="left:46px;top:287px;width:303px;height:20px;background:#f7f7f7;border-bottom:1px solid #ececec"></div>
<div class="a" style="left:46px;top:307px;width:303px;height:20px;background:#fff;border-bottom:1px solid #ececec"></div>
<div class="a" style="left:46px;top:327px;width:303px;height:20px;background:#f7f7f7;border-bottom:1px solid #ececec"></div>
<div class="a" style="left:46px;top:347px;width:303px;height:20px;background:#fff;border-bottom:1px solid #ececec"></div>
<div class="a" style="left:46px;top:367px;width:303px;height:20px;background:#f7f7f7;border-bottom:1px solid #ececec"></div>
<div class="a" style="left:46px;top:387px;width:303px;height:20px;background:#fff;border-bottom:1px solid #ececec"></div>
<div class="a" style="left:46px;top:407px;width:303px;height:20px;background:#f7f7f7;border-bottom:1px solid #ececec"></div>
<div class="a" style="left:46px;top:427px;width:303px;height:20px;background:#fff;border-bottom:1px solid #ececec"></div>
<div class="a" style="left:46px;top:447px;width:303px;height:20px;background:#f7f7f7;border-bottom:1px solid #ececec"></div>
<div class="a" style="left:46px;top:467px;width:303px;height:20px;background:#fff;border-bottom:1px solid #ececec"></div>
<div class="a" style="left:46px;top:487px;width:303px;height:20px;background:#f7f7f7;border-bottom:1px solid #ececec"></div>
<div class="a" style="left:46px;top:507px;width:303px;height:20px;background:#fff;border-bottom:1px solid #ececec"></div>
<div class="a" style="left:46px;top:527px;width:303px;height:20px;background:#f7f7f7;border-bottom:1px solid #ececec"></div>
<div class="a" style="left:46px;top:547px;width:303px;height:20px;background:#fff;border-bottom:1px solid #ececec"></div>
<div class="a" style="left:46px;top:567px;width:303px;height:20px;background:#f7f7f7;border-bottom:1px solid #ececec"></div>
<div class="a" style="left:46px;top:587px;width:303px;height:20px;background:#fff;border-bottom:1px solid #ececec"></div>
<div class="a" style="left:46px;top:607px;width:303px;height:20px;background:#f7f7f7;border-bottom:1px solid #ececec"></div>
<div class="a" style="left:46px;top:627px;width:303px;height:20px;background:#fff;border-bottom:1px solid #ececec"></div>
<div class="a" style="left:46px;top:647px;width:303px;height:20px;background:#f7f7f7;border-bottom:1px solid #ececec"></div>
<div class="a" style="left:46px;top:667px;width:303px;height:20px;background:#fff;border-bottom:1px solid #ececec"></div>
<div class="a" style="left:46px;top:687px;width:303px;height:20px;background:#f7f7f7;border-bottom:1px solid #ececec"></div>
<div class="a" style="left:46px;top:707px;width:303px;height:20px;background:#fff;border-bottom:1px solid #ececec"></div>
<div class="a" style="left:46px;top:727px;width:303px;height:20px;background:#f7f7f7;border-bottom:1px solid #ececec"></div>
<div class="a" style="left:46px;top:747px;width:303px;height:20px;background:#fff;border-bottom:1px solid #ececec"></div>
<div class="a" style="left:46px;top:767px;width:303px;height:20px;background:#f7f7f7;border-bottom:1px solid #ececec"></div>
<div class="a" style="left:46px;top:787px;width:303px;height:20px;background:#fff;border-bottom:1px solid #ececec"></div>
<div class="a" style="left:46px;top:807px;width:303px;height:20px;background:#f7f7f7;border-bottom:1px solid #ececec"></div>
<div class="a" style="left:46px;top:827px;width:303px;height:20px;background:#fff;border-bottom:1px solid #ececec"></div>
<div class="a" style="left:46px;top:847px;width:303px;height:20px;background:#f7f7f7;border-bottom:1px solid #ececec"></div>
<div class="a" style="left:46px;top:867px;width:303px;height:13px;background:#fff;border-bottom:1px solid #ececec"></div>
<div class="a" style="left:245px;top:206px;width:1px;height:674px;background:#e3e3e3"></div>
<div class="a" style="left:269px;top:206px;width:1px;height:674px;background:#e3e3e3"></div>
<div class="a" style="left:293px;top:206px;width:1px;height:674px;background:#e3e3e3"></div>
<div class="rt" style="left:51px;top:209px">名称</div>
<svg style="left:94px;top:213px" width="10" height="6" viewBox="0 0 10 6"><path d="M0 6H10L5 0Z" fill="#111"/></svg>
<div class="rt" style="left:251px;top:209px">当</div>
<div class="rt" style="left:275px;top:209px">最</div>
<div class="rt" style="left:299px;top:209px">附注</div>
<div class="a" style="left:55px;top:242px;width:1px;height:175px;background-image:linear-gradient(#777 50%,transparent 50%);background-size:1px 2px;opacity:.8"></div>
<div class="a" style="left:74px;top:262px;width:1px;height:115px;background-image:linear-gradient(#777 50%,transparent 50%);background-size:1px 2px;opacity:.8"></div>
<div class="a" style="left:93px;top:266px;width:1px;height:91px;background-image:linear-gradient(#777 50%,transparent 50%);background-size:1px 2px;opacity:.8"></div>
<div class="a" style="left:74px;top:422px;width:1px;height:335px;background-image:linear-gradient(#777 50%,transparent 50%);background-size:1px 2px;opacity:.8"></div>
<div class="a" style="left:60px;top:237px;width:5px;height:1px;background-image:linear-gradient(90deg,#777 50%,transparent 50%);background-size:2px 1px;opacity:.8"></div>
<svg style="left:51px;top:233px" width="9" height="9" viewBox="0 0 9 9"><rect x="0.5" y="0.5" width="8" height="8" fill="#fff" stroke="#dcdcdc"/><path d="M2 4.5H7" stroke="#111" stroke-width="1"/></svg>
<svg style="left:64px;top:228px" width="16" height="16" viewBox="0 0 16 16"><circle cx="8" cy="8" r="7.2" fill="#fff" stroke="#333" stroke-width="1.1"/><path d="M8 2.5V8.3H4.5 M8 0.8V2 M8 14V15.2 M0.8 8H2 M14 8H15.2" fill="none" stroke="#333" stroke-width="1.1"/></svg>
<svg style="left:81px;top:231px" width="17" height="13" viewBox="0 0 17 13"><rect x="0.5" y="0.5" width="13" height="10" fill="#fff" stroke="#333"/><rect x="2.5" y="2.5" width="14" height="10" fill="#f4f4f4" stroke="#333"/><path d="M10 12V9H16 M10 10.5H16 M13 9V12" fill="none" stroke="#666" stroke-width="0.8"/></svg>
<div class="rt" style="left:100px;top:229.8px;color:#111;">图纸</div>
<div class="a" style="left:79px;top:257px;width:5px;height:1px;background-image:linear-gradient(90deg,#777 50%,transparent 50%);background-size:2px 1px;opacity:.8"></div>
<svg style="left:70px;top:253px" width="9" height="9" viewBox="0 0 9 9"><rect x="0.5" y="0.5" width="8" height="8" fill="#fff" stroke="#dcdcdc"/><path d="M2 4.5H7" stroke="#111" stroke-width="1"/></svg>
<svg style="left:83px;top:248px" width="16" height="16" viewBox="0 0 16 16"><circle cx="8" cy="8" r="7.2" fill="#fff" stroke="#333" stroke-width="1.1"/><path d="M8 2.5V8.3H4.5 M8 0.8V2 M8 14V15.2 M0.8 8H2 M14 8H15.2" fill="none" stroke="#333" stroke-width="1.1"/></svg>
<svg style="left:100px;top:251px" width="17" height="12" viewBox="0 0 17 12"><rect x="0.5" y="0.5" width="15" height="11" fill="#f4f4f4" stroke="#333"/><path d="M8.5 11.5V8H15.5 M8.5 9.8H15.5 M12 8V11.5" fill="none" stroke="#666" stroke-width="0.8"/></svg>
<div class="rt" style="left:119px;top:249.8px;color:#111;">图纸页 "A3_1" (工作)</div>
<svg style="left:275px;top:250px" width="15" height="14" viewBox="0 0 15 14"><path d="M1 1L14 13 M14 1L1 13" fill="none" stroke="#ee1c2a" stroke-width="1.8"/></svg>
<div class="a" style="left:94px;top:277px;width:10px;height:1px;background-image:linear-gradient(90deg,#777 50%,transparent 50%);background-size:2px 1px;opacity:.8"></div>
<svg style="left:104px;top:271px" width="15" height="13" viewBox="0 0 15 13"><path d="M1 6.5L5 11L14 1.5" fill="none" stroke="#22d13a" stroke-width="2"/></svg>
<svg style="left:119px;top:271px" width="16" height="13" viewBox="0 0 16 13"><path d="M0.5 9V12.5H15.5V0.5H11.5V9Z" fill="#e8e8e8" stroke="#333"/></svg>
<div class="rt" style="left:138px;top:269.8px;color:#111;">导入的 "Back@2"</div>
<svg style="left:275px;top:271px" width="15" height="13" viewBox="0 0 15 13"><path d="M1 6.5L5 11L14 1.5" fill="none" stroke="#22d13a" stroke-width="2"/></svg>
<svg style="left:89px;top:293px" width="9" height="9" viewBox="0 0 9 9"><rect x="0.5" y="0.5" width="8" height="8" fill="#fff" stroke="#dcdcdc"/><path d="M2 4.5H7" stroke="#111" stroke-width="1"/><path d="M4.5 2V7" stroke="#111" stroke-width="1"/></svg>
<div class="a" style="left:98px;top:297px;width:6px;height:1px;background-image:linear-gradient(90deg,#777 50%,transparent 50%);background-size:2px 1px;opacity:.8"></div>
<svg style="left:104px;top:291px" width="15" height="13" viewBox="0 0 15 13"><path d="M1 6.5L5 11L14 1.5" fill="none" stroke="#22d13a" stroke-width="2"/></svg>
<svg style="left:119px;top:291px" width="16" height="13" viewBox="0 0 16 13"><path d="M0.5 0.5H4.5V8.5H15.5V12.5H0.5Z" fill="#e8e8e8" stroke="#333"/><rect x="9" y="9" width="6" height="3" fill="#999"/></svg>
<div class="rt" style="left:138px;top:289.8px;color:#111;">导入的 "Front@1...</div>
<svg style="left:275px;top:291px" width="15" height="13" viewBox="0 0 15 13"><path d="M1 6.5L5 11L14 1.5" fill="none" stroke="#22d13a" stroke-width="2"/></svg>
<div class="a" style="left:94px;top:317px;width:6px;height:1px;background-image:linear-gradient(90deg,#777 50%,transparent 50%);background-size:2px 1px;opacity:.8"></div>
<svg style="left:101px;top:308px" width="16" height="16" viewBox="0 0 16 16"><circle cx="8" cy="8" r="7.2" fill="#fff" stroke="#333" stroke-width="1.1"/><path d="M8 2.5V8.3H4.5 M8 0.8V2 M8 14V15.2 M0.8 8H2 M14 8H15.2" fill="none" stroke="#333" stroke-width="1.1"/></svg>
<svg style="left:118px;top:308px" width="17.5" height="16.8" viewBox="0 0 17.5 16.8"><g transform="scale(0.7)"><path d="M0.6 17.5V12.5L4.3 4.8C6 2.5 9 1 11.3 0.6C13 0.4 14.5 1.2 14.5 2.5V9.6L23.5 14.5V17.2L13.3 22.5C11 23.2 9 22.7 7.7 21.5Z" fill="#e6e6e6" stroke="#2a2a2a" stroke-width="1.3" stroke-linejoin="round"/>
<path d="M2.3 15.5L5.5 6.3C7.2 4 10 2.4 13.3 2.2V10.8L6.5 19Z" fill="#9c9c9c"/>
<path d="M1.8 13.5L5 5.6C7 3.3 9.8 1.9 12.8 1.7" stroke="#f7f7f7" stroke-width="1.1" fill="none"/>
<path d="M14.5 10L22.5 14.6L14 19.5L8 17.5Z" fill="#d4d4d4"/>
<path d="M1 17.8L7.7 21.3C9.5 22.4 11.5 22.6 13.3 22.1L23 17" stroke="#777" stroke-width="0.9" fill="none"/>
<ellipse cx="12" cy="16.3" rx="4.3" ry="2.5" fill="#8a8a8a" stroke="#333" stroke-width="1"/>
<ellipse cx="12" cy="17" rx="2.9" ry="1.4" fill="#fafafa"/></g></svg>
<div class="rt" style="left:138px;top:309.8px;color:#111;">导入的 "Isometri...</div>
<svg style="left:275px;top:310px" width="15" height="14" viewBox="0 0 15 14"><path d="M1 1L14 13 M14 1L1 13" fill="none" stroke="#ee1c2a" stroke-width="1.8"/></svg>
<div class="a" style="left:94px;top:337px;width:6px;height:1px;background-image:linear-gradient(90deg,#777 50%,transparent 50%);background-size:2px 1px;opacity:.8"></div>
<svg style="left:101px;top:328px" width="16" height="16" viewBox="0 0 16 16"><circle cx="8" cy="8" r="7.2" fill="#fff" stroke="#333" stroke-width="1.1"/><path d="M8 2.5V8.3H4.5 M8 0.8V2 M8 14V15.2 M0.8 8H2 M14 8H15.2" fill="none" stroke="#333" stroke-width="1.1"/></svg>
<svg style="left:119px;top:331px" width="16" height="12" viewBox="0 0 16 12"><path d="M0.5 11.5V6L6 0.5H15.5V11.5Z M0.5 8.5H15.5 M6 8.5V11.5" fill="#e2e2e2" stroke="#333" stroke-width="1"/></svg>
<div class="rt" style="left:138px;top:329.8px;color:#111;">导入的 "Right@4"</div>
<svg style="left:275px;top:330px" width="15" height="14" viewBox="0 0 15 14"><path d="M1 1L14 13 M14 1L1 13" fill="none" stroke="#ee1c2a" stroke-width="1.8"/></svg>
<div class="a" style="left:94px;top:357px;width:6px;height:1px;background-image:linear-gradient(90deg,#777 50%,transparent 50%);background-size:2px 1px;opacity:.8"></div>
<svg style="left:101px;top:348px" width="16" height="16" viewBox="0 0 16 16"><circle cx="8" cy="8" r="7.2" fill="#fff" stroke="#333" stroke-width="1.1"/><path d="M8 2.5V8.3H4.5 M8 0.8V2 M8 14V15.2 M0.8 8H2 M14 8H15.2" fill="none" stroke="#333" stroke-width="1.1"/></svg>
<svg style="left:119px;top:349px" width="16" height="16" viewBox="0 0 16 16"><rect x="0.6" y="0.6" width="14.8" height="9" fill="#fff" stroke="#1ba3d6" stroke-width="1.2"/><circle cx="8" cy="4" r="2.5" fill="none" stroke="#1ba3d6" stroke-width="1.1"/><path d="M0.6 7H15.4" stroke="#1ba3d6"/><rect x="0.6" y="10.8" width="14.8" height="4.6" fill="none" stroke="#e8780c" stroke-width="1.2"/><path d="M5.5 11V15.5 M10.5 11V15.5" stroke="#e8780c"/></svg>
<div class="rt" style="left:138px;top:349.8px;color:#111;">投影 "ORTHO@5"</div>
<svg style="left:275px;top:350px" width="15" height="14" viewBox="0 0 15 14"><path d="M1 1L14 13 M14 1L1 13" fill="none" stroke="#ee1c2a" stroke-width="1.8"/></svg>
<div class="a" style="left:75px;top:377px;width:8px;height:1px;background-image:linear-gradient(90deg,#777 50%,transparent 50%);background-size:2px 1px;opacity:.8"></div>
<svg style="left:86px;top:369px" width="11" height="16" viewBox="0 0 11 16"><path d="M1.5 4.5C1.5 2 3.5 0.8 5.5 0.8C7.8 0.8 9.5 2.5 9.5 4.5C9.5 7.5 5.5 8 5.5 11" fill="none" stroke="#f5a623" stroke-width="1.6"/><circle cx="5.5" cy="14.3" r="1.2" fill="#f5a623"/></svg>
<svg style="left:100px;top:371px" width="16" height="12" viewBox="0 0 16 12"><path d="M0.5 11.5V0.5H5L6.5 2.5H13V5 M0.5 11.5L3 5H15.5L13 11.5Z" fill="#fff" stroke="#333"/></svg>
<div class="rt" style="left:119px;top:369.8px;color:#111;">过时</div>
<svg style="left:51px;top:393px" width="9" height="9" viewBox="0 0 9 9"><rect x="0.5" y="0.5" width="8" height="8" fill="#fff" stroke="#dcdcdc"/><path d="M2 4.5H7" stroke="#111" stroke-width="1"/><path d="M4.5 2V7" stroke="#111" stroke-width="1"/></svg>
<div class="a" style="left:60px;top:397px;width:5px;height:1px;background-image:linear-gradient(90deg,#777 50%,transparent 50%);background-size:2px 1px;opacity:.8"></div>
<svg style="left:65px;top:389px" width="16" height="16" viewBox="0 0 16 16"><rect x="1.5" y="1.5" width="13" height="13" fill="none" stroke="#333"/><rect x="0" y="0" width="3" height="3" fill="#fff" stroke="#333" stroke-width="0.7"/><rect x="13" y="0" width="3" height="3" fill="#fff" stroke="#333" stroke-width="0.7"/><rect x="0" y="13" width="3" height="3" fill="#fff" stroke="#333" stroke-width="0.7"/><rect x="13" y="13" width="3" height="3" fill="#fff" stroke="#333" stroke-width="0.7"/></svg>
<div class="rt" style="left:84px;top:389.8px;color:#111;">组</div>
<svg style="left:51px;top:413px" width="9" height="9" viewBox="0 0 9 9"><rect x="0.5" y="0.5" width="8" height="8" fill="#fff" stroke="#dcdcdc"/><path d="M2 4.5H7" stroke="#111" stroke-width="1"/></svg>
<div class="a" style="left:60px;top:417px;width:6px;height:1px;background-image:linear-gradient(90deg,#777 50%,transparent 50%);background-size:2px 1px;opacity:.8"></div>
<svg style="left:66px;top:410px" width="14" height="14" viewBox="0 0 14 14"><defs><radialGradient id="gsp" cx="0.35" cy="0.3" r="0.75"><stop offset="0" stop-color="#d8ffd0"/><stop offset="0.35" stop-color="#3ed03a"/><stop offset="1" stop-color="#0a7a10"/></radialGradient></defs><circle cx="7" cy="7" r="6.8" fill="url(#gsp)"/></svg>
<svg style="left:81px;top:409px" width="16" height="16" viewBox="0 0 16 16"><rect x="0.5" y="0.5" width="15" height="15" fill="#fff" stroke="#aaa" stroke-dasharray="1 1"/><rect x="2.5" y="3" width="7" height="7" fill="#fff" stroke="#333"/><rect x="6" y="6.5" width="7.5" height="7" fill="#e8780c" stroke="#a04d00" stroke-width="0.7"/></svg>
<svg style="left:275px;top:411px" width="15" height="13" viewBox="0 0 15 13"><path d="M1 6.5L5 11L14 1.5" fill="none" stroke="#22d13a" stroke-width="2"/></svg>
<div class="rt" style="left:100px;top:409.8px;color:#111;">模型历史记录</div>
<div class="a" style="left:75px;top:436px;width:8px;height:1px;background-image:linear-gradient(90deg,#777 50%,transparent 50%);background-size:2px 1px;opacity:.8"></div>
<svg style="left:83px;top:429px" width="16" height="14" viewBox="0 0 16 14"><path d="M0.8 7C3 3.5 5.5 2.2 8 2.2C10.5 2.2 13 3.5 15.2 7C13 10.5 10.5 11.8 8 11.8C5.5 11.8 3 10.5 0.8 7Z" fill="#fff" stroke="#333" stroke-width="1.1"/><circle cx="8" cy="7" r="3.3" fill="none" stroke="#333" stroke-width="1.1"/><path d="M3 14L14 0.5" stroke="#333" stroke-width="1.1"/></svg>
<svg style="left:100px;top:428px" width="16" height="16" viewBox="0 0 16 16"><path d="M8 1V9 M8 9L2 14 M8 9L14 14" fill="none" stroke="#d9608a" stroke-width="1.3"/><circle cx="8" cy="9" r="2" fill="#fff" stroke="#d9608a"/><path d="M6.5 3L8 1L9.5 3" fill="none" stroke="#d9608a"/></svg>
<div class="rt" style="left:119px;top:429.3px;color:#999;-webkit-text-stroke:0;">基准坐标系 (0)</div>
<svg style="left:275px;top:430px" width="15" height="13" viewBox="0 0 15 13"><path d="M1 6.5L5 11L14 1.5" fill="none" stroke="#22d13a" stroke-width="2"/></svg>
<div class="a" style="left:75px;top:456px;width:8px;height:1px;background-image:linear-gradient(90deg,#777 50%,transparent 50%);background-size:2px 1px;opacity:.8"></div>
<svg style="left:83px;top:449px" width="16" height="14" viewBox="0 0 16 14"><path d="M0.8 7C3 3.5 5.5 2.2 8 2.2C10.5 2.2 13 3.5 15.2 7C13 10.5 10.5 11.8 8 11.8C5.5 11.8 3 10.5 0.8 7Z" fill="#fff" stroke="#333" stroke-width="1.1"/><circle cx="8" cy="7" r="3.5" fill="#3a3a3a"/></svg>
<svg style="left:100px;top:448px" width="16" height="16" viewBox="0 0 16 16"><path d="M1.5 4.5L8 1L14.5 4.5V11.5L8 15L1.5 11.5Z" fill="#d0d0d0" stroke="#444" stroke-width="0.9"/><path d="M1.5 4.5L8 8L14.5 4.5 M8 8V15" fill="none" stroke="#444" stroke-width="0.8"/><path d="M1.8 4.8L8 8V14.6L1.8 11.3Z" fill="#efefef"/></svg>
<div class="rt" style="left:119px;top:449.3px;color:#111;">块 (1)</div>
<svg style="left:275px;top:450px" width="15" height="13" viewBox="0 0 15 13"><path d="M1 6.5L5 11L14 1.5" fill="none" stroke="#22d13a" stroke-width="2"/></svg>
<div class="a" style="left:75px;top:476px;width:8px;height:1px;background-image:linear-gradient(90deg,#777 50%,transparent 50%);background-size:2px 1px;opacity:.8"></div>
<svg style="left:83px;top:469px" width="16" height="14" viewBox="0 0 16 14"><path d="M0.8 7C3 3.5 5.5 2.2 8 2.2C10.5 2.2 13 3.5 15.2 7C13 10.5 10.5 11.8 8 11.8C5.5 11.8 3 10.5 0.8 7Z" fill="#fff" stroke="#333" stroke-width="1.1"/><circle cx="8" cy="7" r="3.3" fill="none" stroke="#333" stroke-width="1.1"/><path d="M3 14L14 0.5" stroke="#333" stroke-width="1.1"/></svg>
<svg style="left:100px;top:468px" width="16" height="16" viewBox="0 0 16 16"><path d="M0.8 8L8 3.5L15.2 8L8 12.5Z" fill="#f7c7d7" stroke="#e87aa0" stroke-width="1"/></svg>
<div class="rt" style="left:119px;top:469.3px;color:#999;-webkit-text-stroke:0;">基准平面 (2)</div>
<svg style="left:275px;top:470px" width="15" height="13" viewBox="0 0 15 13"><path d="M1 6.5L5 11L14 1.5" fill="none" stroke="#22d13a" stroke-width="2"/></svg>
<div class="a" style="left:75px;top:496px;width:8px;height:1px;background-image:linear-gradient(90deg,#777 50%,transparent 50%);background-size:2px 1px;opacity:.8"></div>
<svg style="left:83px;top:489px" width="16" height="14" viewBox="0 0 16 14"><path d="M0.8 7C3 3.5 5.5 2.2 8 2.2C10.5 2.2 13 3.5 15.2 7C13 10.5 10.5 11.8 8 11.8C5.5 11.8 3 10.5 0.8 7Z" fill="#fff" stroke="#333" stroke-width="1.1"/><circle cx="8" cy="7" r="3.3" fill="none" stroke="#333" stroke-width="1.1"/><path d="M3 14L14 0.5" stroke="#333" stroke-width="1.1"/></svg>
<svg style="left:100px;top:488px" width="16" height="16" viewBox="0 0 16 16"><path d="M0.8 8L8 3.5L15.2 8L8 12.5Z" fill="#f7c7d7" stroke="#e87aa0" stroke-width="1"/></svg>
<div class="rt" style="left:119px;top:489.3px;color:#999;-webkit-text-stroke:0;">基准平面 (3)</div>
<svg style="left:275px;top:490px" width="15" height="13" viewBox="0 0 15 13"><path d="M1 6.5L5 11L14 1.5" fill="none" stroke="#22d13a" stroke-width="2"/></svg>
<div class="a" style="left:75px;top:516px;width:8px;height:1px;background-image:linear-gradient(90deg,#777 50%,transparent 50%);background-size:2px 1px;opacity:.8"></div>
<svg style="left:83px;top:509px" width="16" height="14" viewBox="0 0 16 14"><path d="M0.8 7C3 3.5 5.5 2.2 8 2.2C10.5 2.2 13 3.5 15.2 7C13 10.5 10.5 11.8 8 11.8C5.5 11.8 3 10.5 0.8 7Z" fill="#fff" stroke="#333" stroke-width="1.1"/><circle cx="8" cy="7" r="3.5" fill="#3a3a3a"/></svg>
<svg style="left:100px;top:508px" width="16" height="16" viewBox="0 0 16 16"><path d="M1 10L8 6.5L15 10L8 13.5Z" fill="#f2f2f2" stroke="#444" stroke-width="0.8"/><path d="M1 10V12.5L8 16V13.5Z" fill="#d6d6d6" stroke="#444" stroke-width="0.8"/><path d="M15 10V12.5L8 16V13.5Z" fill="#a8a8a8" stroke="#444" stroke-width="0.8"/><path d="M4.5 2.5V8.5C4.5 10.3 11.5 10.3 11.5 8.5V2.5" fill="#e8780c" stroke="#9a4a00" stroke-width="0.7"/><ellipse cx="8" cy="2.6" rx="3.5" ry="1.6" fill="#f7a84a" stroke="#9a4a00" stroke-width="0.7"/></svg>
<div class="rt" style="left:119px;top:509.3px;color:#111;">凸台 (4)</div>
<svg style="left:275px;top:510px" width="15" height="13" viewBox="0 0 15 13"><path d="M1 6.5L5 11L14 1.5" fill="none" stroke="#22d13a" stroke-width="2"/></svg>
<div class="a" style="left:75px;top:536px;width:8px;height:1px;background-image:linear-gradient(90deg,#777 50%,transparent 50%);background-size:2px 1px;opacity:.8"></div>
<svg style="left:83px;top:529px" width="16" height="14" viewBox="0 0 16 14"><path d="M0.8 7C3 3.5 5.5 2.2 8 2.2C10.5 2.2 13 3.5 15.2 7C13 10.5 10.5 11.8 8 11.8C5.5 11.8 3 10.5 0.8 7Z" fill="#fff" stroke="#333" stroke-width="1.1"/><circle cx="8" cy="7" r="3.3" fill="none" stroke="#333" stroke-width="1.1"/><path d="M3 14L14 0.5" stroke="#333" stroke-width="1.1"/></svg>
<svg style="left:100px;top:528px" width="16" height="16" viewBox="0 0 16 16"><path d="M0.8 8L8 3.5L15.2 8L8 12.5Z" fill="#f7c7d7" stroke="#e87aa0" stroke-width="1"/></svg>
<div class="rt" style="left:119px;top:529.3px;color:#999;-webkit-text-stroke:0;">基准平面 (5)</div>
<svg style="left:275px;top:530px" width="15" height="13" viewBox="0 0 15 13"><path d="M1 6.5L5 11L14 1.5" fill="none" stroke="#22d13a" stroke-width="2"/></svg>
<div class="a" style="left:75px;top:556px;width:8px;height:1px;background-image:linear-gradient(90deg,#777 50%,transparent 50%);background-size:2px 1px;opacity:.8"></div>
<svg style="left:83px;top:549px" width="16" height="14" viewBox="0 0 16 14"><path d="M0.8 7C3 3.5 5.5 2.2 8 2.2C10.5 2.2 13 3.5 15.2 7C13 10.5 10.5 11.8 8 11.8C5.5 11.8 3 10.5 0.8 7Z" fill="#fff" stroke="#333" stroke-width="1.1"/><circle cx="8" cy="7" r="3.5" fill="#3a3a3a"/></svg>
<svg style="left:100px;top:548px" width="16" height="16" viewBox="0 0 16 16"><path d="M1 10L8 6.5L15 10L8 13.5Z" fill="#f2f2f2" stroke="#444" stroke-width="0.8"/><path d="M1 10V12.5L8 16V13.5Z" fill="#d6d6d6" stroke="#444" stroke-width="0.8"/><path d="M15 10V12.5L8 16V13.5Z" fill="#a8a8a8" stroke="#444" stroke-width="0.8"/><path d="M4.5 2.5V8.5C4.5 10.3 11.5 10.3 11.5 8.5V2.5" fill="#e8780c" stroke="#9a4a00" stroke-width="0.7"/><ellipse cx="8" cy="2.6" rx="3.5" ry="1.6" fill="#f7a84a" stroke="#9a4a00" stroke-width="0.7"/></svg>
<div class="rt" style="left:119px;top:549.3px;color:#111;">凸台 (6)</div>
<svg style="left:275px;top:550px" width="15" height="13" viewBox="0 0 15 13"><path d="M1 6.5L5 11L14 1.5" fill="none" stroke="#22d13a" stroke-width="2"/></svg>
<div class="a" style="left:75px;top:576px;width:8px;height:1px;background-image:linear-gradient(90deg,#777 50%,transparent 50%);background-size:2px 1px;opacity:.8"></div>
<svg style="left:83px;top:569px" width="16" height="14" viewBox="0 0 16 14"><path d="M0.8 7C3 3.5 5.5 2.2 8 2.2C10.5 2.2 13 3.5 15.2 7C13 10.5 10.5 11.8 8 11.8C5.5 11.8 3 10.5 0.8 7Z" fill="#fff" stroke="#333" stroke-width="1.1"/><circle cx="8" cy="7" r="3.5" fill="#3a3a3a"/></svg>
<svg style="left:100px;top:568px" width="16" height="16" viewBox="0 0 16 16"><path d="M0.8 5.5V12L5 14.5V10L8 11.7V9.5Z" fill="#e6e6e6" stroke="#444" stroke-width="0.8"/><path d="M15.2 5.5V12L11 14.5V10L8 11.7V9.5Z" fill="#b8b8b8" stroke="#444" stroke-width="0.8"/><path d="M0.8 5.5L8 1.5L15.2 5.5L8 9.5Z" fill="#fff" stroke="#1fb0e0" stroke-width="1.3" stroke-linejoin="round"/><path d="M4.3 5.5L8 3.5L11.7 5.5" fill="none" stroke="#1fb0e0" stroke-width="1.1"/></svg>
<div class="rt" style="left:119px;top:569.3px;color:#111;">拉伸 (7)</div>
<svg style="left:275px;top:570px" width="15" height="13" viewBox="0 0 15 13"><path d="M1 6.5L5 11L14 1.5" fill="none" stroke="#22d13a" stroke-width="2"/></svg>
<div class="a" style="left:75px;top:596px;width:8px;height:1px;background-image:linear-gradient(90deg,#777 50%,transparent 50%);background-size:2px 1px;opacity:.8"></div>
<svg style="left:83px;top:589px" width="16" height="14" viewBox="0 0 16 14"><path d="M0.8 7C3 3.5 5.5 2.2 8 2.2C10.5 2.2 13 3.5 15.2 7C13 10.5 10.5 11.8 8 11.8C5.5 11.8 3 10.5 0.8 7Z" fill="#fff" stroke="#333" stroke-width="1.1"/><circle cx="8" cy="7" r="3.5" fill="#3a3a3a"/></svg>
<svg style="left:100px;top:588px" width="16" height="16" viewBox="0 0 16 16"><path d="M0.8 5.5V12L5 14.5V10L8 11.7V9.5Z" fill="#e6e6e6" stroke="#444" stroke-width="0.8"/><path d="M15.2 5.5V12L11 14.5V10L8 11.7V9.5Z" fill="#b8b8b8" stroke="#444" stroke-width="0.8"/><path d="M0.8 5.5L8 1.5L15.2 5.5L8 9.5Z" fill="#fff" stroke="#1fb0e0" stroke-width="1.3" stroke-linejoin="round"/><path d="M4.3 5.5L8 3.5L11.7 5.5" fill="none" stroke="#1fb0e0" stroke-width="1.1"/></svg>
<div class="rt" style="left:119px;top:589.3px;color:#111;">拉伸 (9)</div>
<svg style="left:275px;top:590px" width="15" height="13" viewBox="0 0 15 13"><path d="M1 6.5L5 11L14 1.5" fill="none" stroke="#22d13a" stroke-width="2"/></svg>
<div class="a" style="left:75px;top:616px;width:8px;height:1px;background-image:linear-gradient(90deg,#777 50%,transparent 50%);background-size:2px 1px;opacity:.8"></div>
<svg style="left:83px;top:609px" width="16" height="14" viewBox="0 0 16 14"><path d="M0.8 7C3 3.5 5.5 2.2 8 2.2C10.5 2.2 13 3.5 15.2 7C13 10.5 10.5 11.8 8 11.8C5.5 11.8 3 10.5 0.8 7Z" fill="#fff" stroke="#333" stroke-width="1.1"/><circle cx="8" cy="7" r="3.5" fill="#3a3a3a"/></svg>
<svg style="left:100px;top:608px" width="16" height="16" viewBox="0 0 16 16"><path d="M5 1H11V13L8 15.5L5 13Z" fill="#fff" stroke="#333" stroke-width="1"/></svg>
<div class="rt" style="left:119px;top:609.3px;color:#111;">Ø90 孔 (10)</div>
<svg style="left:275px;top:610px" width="15" height="13" viewBox="0 0 15 13"><path d="M1 6.5L5 11L14 1.5" fill="none" stroke="#22d13a" stroke-width="2"/></svg>
<div class="a" style="left:75px;top:636px;width:8px;height:1px;background-image:linear-gradient(90deg,#777 50%,transparent 50%);background-size:2px 1px;opacity:.8"></div>
<svg style="left:83px;top:629px" width="16" height="14" viewBox="0 0 16 14"><path d="M0.8 7C3 3.5 5.5 2.2 8 2.2C10.5 2.2 13 3.5 15.2 7C13 10.5 10.5 11.8 8 11.8C5.5 11.8 3 10.5 0.8 7Z" fill="#fff" stroke="#333" stroke-width="1.1"/><circle cx="8" cy="7" r="3.5" fill="#3a3a3a"/></svg>
<svg style="left:100px;top:628px" width="16" height="16" viewBox="0 0 16 16"><path d="M5 1H11V13L8 15.5L5 13Z" fill="#fff" stroke="#333" stroke-width="1"/></svg>
<div class="rt" style="left:119px;top:629.3px;color:#111;">Ø18 孔 (11)</div>
<svg style="left:275px;top:630px" width="15" height="13" viewBox="0 0 15 13"><path d="M1 6.5L5 11L14 1.5" fill="none" stroke="#22d13a" stroke-width="2"/></svg>
<div class="a" style="left:75px;top:656px;width:8px;height:1px;background-image:linear-gradient(90deg,#777 50%,transparent 50%);background-size:2px 1px;opacity:.8"></div>
<svg style="left:83px;top:649px" width="16" height="14" viewBox="0 0 16 14"><path d="M0.8 7C3 3.5 5.5 2.2 8 2.2C10.5 2.2 13 3.5 15.2 7C13 10.5 10.5 11.8 8 11.8C5.5 11.8 3 10.5 0.8 7Z" fill="#fff" stroke="#333" stroke-width="1.1"/><circle cx="8" cy="7" r="3.5" fill="#3a3a3a"/></svg>
<svg style="left:100px;top:648px" width="16" height="16" viewBox="0 0 16 16"><path d="M5 1H11V13L8 15.5L5 13Z" fill="#fff" stroke="#333" stroke-width="1"/></svg>
<div class="rt" style="left:119px;top:649.3px;color:#111;">Ø18 孔 (12)</div>
<svg style="left:275px;top:650px" width="15" height="13" viewBox="0 0 15 13"><path d="M1 6.5L5 11L14 1.5" fill="none" stroke="#22d13a" stroke-width="2"/></svg>
<div class="a" style="left:75px;top:676px;width:8px;height:1px;background-image:linear-gradient(90deg,#777 50%,transparent 50%);background-size:2px 1px;opacity:.8"></div>
<svg style="left:83px;top:669px" width="16" height="14" viewBox="0 0 16 14"><path d="M0.8 7C3 3.5 5.5 2.2 8 2.2C10.5 2.2 13 3.5 15.2 7C13 10.5 10.5 11.8 8 11.8C5.5 11.8 3 10.5 0.8 7Z" fill="#fff" stroke="#333" stroke-width="1.1"/><circle cx="8" cy="7" r="3.5" fill="#3a3a3a"/></svg>
<svg style="left:100px;top:668px" width="16" height="16" viewBox="0 0 16 16"><path d="M5 1H11V13L8 15.5L5 13Z" fill="#fff" stroke="#333" stroke-width="1"/></svg>
<div class="rt" style="left:119px;top:669.3px;color:#111;">Ø36 孔 (13)</div>
<svg style="left:275px;top:670px" width="15" height="13" viewBox="0 0 15 13"><path d="M1 6.5L5 11L14 1.5" fill="none" stroke="#22d13a" stroke-width="2"/></svg>
<div class="a" style="left:75px;top:696px;width:8px;height:1px;background-image:linear-gradient(90deg,#777 50%,transparent 50%);background-size:2px 1px;opacity:.8"></div>
<svg style="left:83px;top:689px" width="16" height="14" viewBox="0 0 16 14"><path d="M0.8 7C3 3.5 5.5 2.2 8 2.2C10.5 2.2 13 3.5 15.2 7C13 10.5 10.5 11.8 8 11.8C5.5 11.8 3 10.5 0.8 7Z" fill="#fff" stroke="#333" stroke-width="1.1"/><circle cx="8" cy="7" r="3.5" fill="#3a3a3a"/></svg>
<svg style="left:100px;top:688px" width="16" height="16" viewBox="0 0 16 16"><path d="M0.8 5.5V12L5 14.5V10L8 11.7V9.5Z" fill="#e6e6e6" stroke="#444" stroke-width="0.8"/><path d="M15.2 5.5V12L11 14.5V10L8 11.7V9.5Z" fill="#b8b8b8" stroke="#444" stroke-width="0.8"/><path d="M0.8 5.5L8 1.5L15.2 5.5L8 9.5Z" fill="#fff" stroke="#1fb0e0" stroke-width="1.3" stroke-linejoin="round"/><path d="M4.3 5.5L8 3.5L11.7 5.5" fill="none" stroke="#1fb0e0" stroke-width="1.1"/></svg>
<div class="rt" style="left:119px;top:689.3px;color:#111;">拉伸 (15)</div>
<svg style="left:275px;top:690px" width="15" height="13" viewBox="0 0 15 13"><path d="M1 6.5L5 11L14 1.5" fill="none" stroke="#22d13a" stroke-width="2"/></svg>
<div class="a" style="left:75px;top:716px;width:8px;height:1px;background-image:linear-gradient(90deg,#777 50%,transparent 50%);background-size:2px 1px;opacity:.8"></div>
<svg style="left:83px;top:709px" width="16" height="14" viewBox="0 0 16 14"><path d="M0.8 7C3 3.5 5.5 2.2 8 2.2C10.5 2.2 13 3.5 15.2 7C13 10.5 10.5 11.8 8 11.8C5.5 11.8 3 10.5 0.8 7Z" fill="#fff" stroke="#333" stroke-width="1.1"/><circle cx="8" cy="7" r="3.5" fill="#3a3a3a"/></svg>
<svg style="left:100px;top:708px" width="16" height="16" viewBox="0 0 16 16"><path d="M5 1H11V13L8 15.5L5 13Z" fill="#fff" stroke="#333" stroke-width="1"/></svg>
<div class="rt" style="left:119px;top:709.3px;color:#111;">Ø12 孔 (16)</div>
<svg style="left:275px;top:710px" width="15" height="13" viewBox="0 0 15 13"><path d="M1 6.5L5 11L14 1.5" fill="none" stroke="#22d13a" stroke-width="2"/></svg>
<div class="a" style="left:75px;top:736px;width:8px;height:1px;background-image:linear-gradient(90deg,#777 50%,transparent 50%);background-size:2px 1px;opacity:.8"></div>
<svg style="left:83px;top:729px" width="16" height="14" viewBox="0 0 16 14"><path d="M0.8 7C3 3.5 5.5 2.2 8 2.2C10.5 2.2 13 3.5 15.2 7C13 10.5 10.5 11.8 8 11.8C5.5 11.8 3 10.5 0.8 7Z" fill="#fff" stroke="#333" stroke-width="1.1"/><circle cx="8" cy="7" r="3.5" fill="#3a3a3a"/></svg>
<svg style="left:70px;top:732px" width="9" height="9" viewBox="0 0 9 9"><rect x="0.5" y="0.5" width="8" height="8" fill="#fff" stroke="#dcdcdc"/><path d="M2 4.5H7" stroke="#111" stroke-width="1"/><path d="M4.5 2V7" stroke="#111" stroke-width="1"/></svg>
<svg style="left:100px;top:728px" width="16" height="16" viewBox="0 0 16 16"><path d="M0.5 9L5 6.5L8 8V12.5L3 14L0.5 12.5Z" fill="#e8e8e8" stroke="#333" stroke-width="0.9"/><path d="M4 2.5V8.5C4 9.6 11 9.6 11 8.5V2.5" fill="#e8780c"/><ellipse cx="7.5" cy="2.5" rx="3.5" ry="1.5" fill="#f7a848"/><circle cx="8.2" cy="9.2" r="2.5" fill="#fff" stroke="#111" stroke-width="1.1"/><circle cx="13.2" cy="9.2" r="2.5" fill="#fff" stroke="#111" stroke-width="1.1"/><circle cx="8.2" cy="14.2" r="2.5" fill="#fff" stroke="#111" stroke-width="1.1"/><circle cx="13.2" cy="14.2" r="2.5" fill="#fff" stroke="#111" stroke-width="1.1"/></svg>
<div class="rt" style="left:119px;top:729.3px;color:#111;">阵列特征 [线性] (17)</div>
<svg style="left:275px;top:730px" width="15" height="13" viewBox="0 0 15 13"><path d="M1 6.5L5 11L14 1.5" fill="none" stroke="#22d13a" stroke-width="2"/></svg>
<div class="a" style="left:75px;top:756px;width:8px;height:1px;background-image:linear-gradient(90deg,#777 50%,transparent 50%);background-size:2px 1px;opacity:.8"></div>
<svg style="left:83px;top:749px" width="16" height="14" viewBox="0 0 16 14"><path d="M0.8 7C3 3.5 5.5 2.2 8 2.2C10.5 2.2 13 3.5 15.2 7C13 10.5 10.5 11.8 8 11.8C5.5 11.8 3 10.5 0.8 7Z" fill="#fff" stroke="#333" stroke-width="1.1"/><circle cx="8" cy="7" r="3.5" fill="#3a3a3a"/></svg>
<svg style="left:100px;top:748px" width="16" height="16" viewBox="0 0 16 16"><path d="M0.5 4.5L8 0.5L15.5 4.5V11.5L8 15.5L0.5 11.5Z" fill="#bdbdbd" stroke="#333" stroke-width="1.1" stroke-linejoin="round"/><path d="M1 4.7L8 1L15 4.7L8 8.5Z" fill="#ececec"/><path d="M0.8 4.7L4.5 2.8L11.5 6.6L8 8.5V13.5C5 12.5 1.5 11 0.8 8.5Z" fill="#f08a1e"/><path d="M3 4L10 7.7" stroke="#f7b84a" stroke-width="1.2"/><path d="M8 8.5L15.2 4.7V11.4L8 15.3Z" fill="#a8a8a8"/><path d="M0.5 4.5L8 0.5L15.5 4.5V11.5L8 15.5L0.5 11.5Z" fill="none" stroke="#333" stroke-width="1.1" stroke-linejoin="round"/></svg>
<div class="rt" style="left:119px;top:749.3px;color:#111;font-weight:bold;-webkit-text-stroke:0;">边倒圆 (24)</div>
<svg style="left:275px;top:750px" width="15" height="13" viewBox="0 0 15 13"><path d="M1 6.5L5 11L14 1.5" fill="none" stroke="#22d13a" stroke-width="2"/></svg>
<svg style="left:253px;top:749px" width="10" height="16" viewBox="0 0 10 16"><path d="M1.5 1V14.5 M1.5 3.3H4.5 M1.5 7.8H4.5 M1.5 12.8H4.5" fill="none" stroke="#333" stroke-width="1"/><rect x="4.7" y="1.5" width="3.3" height="3.3" fill="#fff" stroke="#333" stroke-width="1"/><rect x="4.3" y="6.2" width="4" height="3.6" fill="#f08a1e"/><rect x="4.7" y="11" width="3.3" height="3.3" fill="#fff" stroke="#333" stroke-width="1"/></svg>
<div class="a" style="left:46px;top:880px;width:303px;height:17px;background:#f0f0f0;border-top:1px solid #e0e0e0"></div>
<div class="a" style="left:63px;top:888px;width:234px;height:2px;background:#808080"></div>
<div class="a" style="left:45px;top:900px;width:305px;height:6px;background:#dedede;border:1px solid #c4c4c4"></div>
<svg style="left:55px;top:915.5px" width="5" height="9" viewBox="0 0 5 9"><path d="M0 0L5 4.5L0 9Z" fill="#1d6e96"/></svg>
<div class="a" style="left:69px;top:912.0px;font-size:14px;line-height:17px;color:#1c6c98">搜索</div>
<div class="a" style="left:45px;top:930.0px;width:305px;height:2px;background:#d2d2d2"></div>
<svg style="left:55px;top:939.5px" width="5" height="9" viewBox="0 0 5 9"><path d="M0 0L5 4.5L0 9Z" fill="#1d6e96"/></svg>
<div class="a" style="left:69px;top:936.0px;font-size:14px;line-height:17px;color:#1c6c98">相关性</div>
<div class="a" style="left:45px;top:954.0px;width:305px;height:2px;background:#d2d2d2"></div>
<svg style="left:55px;top:963.5px" width="5" height="9" viewBox="0 0 5 9"><path d="M0 0L5 4.5L0 9Z" fill="#1d6e96"/></svg>
<div class="a" style="left:69px;top:960.0px;font-size:14px;line-height:17px;color:#1c6c98">细节</div>
<div class="a" style="left:45px;top:978.0px;width:305px;height:2px;background:#d2d2d2"></div>
<svg style="left:55px;top:987.5px" width="5" height="9" viewBox="0 0 5 9"><path d="M0 0L5 4.5L0 9Z" fill="#1d6e96"/></svg>
<div class="a" style="left:69px;top:984.0px;font-size:14px;line-height:17px;color:#1c6c98">预览</div>
<div class="a" style="left:45px;top:1002.0px;width:305px;height:2px;background:#d2d2d2"></div>
<svg style="left:43px;top:182px" width="18.0" height="17.3" viewBox="0 0 18.0 17.3"><g transform="scale(0.72)"><path d="M0.6 17.5V12.5L4.3 4.8C6 2.5 9 1 11.3 0.6C13 0.4 14.5 1.2 14.5 2.5V9.6L23.5 14.5V17.2L13.3 22.5C11 23.2 9 22.7 7.7 21.5Z" fill="#e6e6e6" stroke="#2a2a2a" stroke-width="1.3" stroke-linejoin="round"/>
<path d="M2.3 15.5L5.5 6.3C7.2 4 10 2.4 13.3 2.2V10.8L6.5 19Z" fill="#9c9c9c"/>
<path d="M1.8 13.5L5 5.6C7 3.3 9.8 1.9 12.8 1.7" stroke="#f7f7f7" stroke-width="1.1" fill="none"/>
<path d="M14.5 10L22.5 14.6L14 19.5L8 17.5Z" fill="#d4d4d4"/>
<path d="M1 17.8L7.7 21.3C9.5 22.4 11.5 22.6 13.3 22.1L23 17" stroke="#777" stroke-width="0.9" fill="none"/>
<ellipse cx="12" cy="16.3" rx="4.3" ry="2.5" fill="#8a8a8a" stroke="#333" stroke-width="1"/>
<ellipse cx="12" cy="17" rx="2.9" ry="1.4" fill="#fafafa"/></g></svg>
<div class="a" style="left:63px;top:182.5px;font-size:12.3px;line-height:14px;color:#111">部件导航器</div>
<div class="a" style="left:336px;top:185px;width:13px;height:11px;border:1.5px solid #111;border-top-width:2.5px"></div>
<div id="tabbar" class="a"></div>
<div id="gfx" class="a"></div>
<div class="a" style="left:360px;top:178px;width:152px;height:26px;background:#05628a"></div>
<svg style="left:367px;top:182px" width="15" height="16" viewBox="0 0 15 16"><path d="M1 4H11V12L8 15H1Z" fill="#d0d0d0" stroke="#222" stroke-width="1"/><path d="M2 5V14" stroke="#fff" stroke-width="0.8"/><circle cx="6.5" cy="9.5" r="2.5" fill="#05628a" stroke="#222"/><path d="M3 3.5H12V2 M11 1V6" fill="none" stroke="#222" stroke-width="1.2"/><path d="M3.5 3.2H11" stroke="#fff" stroke-width="1"/></svg>
<div class="a" style="left:386px;top:183px;font-size:12.6px;line-height:15px;color:#fff">Partial_View.prt</div>
<svg style="left:480px;top:184px" width="12" height="13" viewBox="0 0 12 13"><path d="M8 6V12H1V1H7" fill="none" stroke="#fff" stroke-width="1.6"/><path d="M4 8L10.5 1.5L11.5 2.5L5 9Z" fill="#fff"/></svg>
<svg style="left:497px;top:185px" width="9" height="9" viewBox="0 0 9 9"><path d="M1 1L8 8 M8 1L1 8" stroke="#c0c8cc" stroke-width="1.8"/></svg>
<div class="a" style="left:360px;top:203px;width:1560px;height:2px;background:#05628a"></div>
<svg style="left:360px;top:205px;overflow:hidden" width="1560" height="805" viewBox="360 205 1560 805">
<defs>
<linearGradient id="oL" x1="0" y1="0" x2="1" y2="0"><stop offset="0" stop-color="#b36a00"/><stop offset="0.6" stop-color="#b56c00"/><stop offset="1" stop-color="#c87400"/></linearGradient>
<linearGradient id="oC" x1="0" y1="0" x2="1" y2="0"><stop offset="0" stop-color="#c06c00"/><stop offset="0.35" stop-color="#d98500"/><stop offset="1" stop-color="#d88200"/></linearGradient>
<linearGradient id="oF" x1="0" y1="0" x2="1" y2="0"><stop offset="0" stop-color="#b06800"/><stop offset="0.7" stop-color="#c27300"/><stop offset="1" stop-color="#b56c00"/></linearGradient>
<linearGradient id="oH" x1="0" y1="0" x2="1" y2="0"><stop offset="0" stop-color="#b06800"/><stop offset="0.5" stop-color="#d08000"/><stop offset="1" stop-color="#a86400"/></linearGradient>
<filter id="bsh2" x="-40%" y="-40%" width="180%" height="180%"><feDropShadow dx="0.6" dy="0.9" stdDeviation="1.4" flood-color="#000" flood-opacity="0.9"/></filter>
</defs>
<path d="M382.5 205V826.5H1769.5V205" fill="none" stroke="#626262" stroke-width="1" stroke-dasharray="8 8" stroke-dashoffset="4"/>
<g fill="none" stroke="#2a2a2a" stroke-width="1">
<path d="M511.5 205A33 33 0 0 0 496.7 228.5V276.5H530"/>
<path d="M530 205V430"/>
<path d="M530 252.9H584.4"/>
<circle cx="530" cy="228.5" r="9.9"/>
<path d="M503.7 228.5H556"/>
<path d="M496.7 351.2H530 M496.7 351.2V397A33 33 0 0 0 527.5 429.6H560"/>
<circle cx="530" cy="400" r="9.9"/>
<path d="M503.7 400H556 M530 376.3H560"/>
<circle cx="662.1" cy="314.1" r="99.2"/>
<circle cx="662.1" cy="314.1" r="74.5"/>
<path d="M662.5 200V360" stroke-dasharray="42 5 10 5"/>
<path d="M546 314.5H794" stroke-dasharray="42 6 10 5"/>
<path d="M794 314.5H813" stroke="#111"/>
<path d="M794.3 205V360" stroke="#555"/>
<path d="M810.7 205V360" stroke="#111"/>
<path d="M810.7 205A16.5 25 0 0 1 827 230V360" stroke="#555"/>
<path d="M794 218.5A10 10 0 0 0 794 238.5"/>
<path d="M767.8 228.5H820" stroke-dasharray="18 4 8 7 20"/>
<path d="M753.7 277H794.3 M752.8 351.9H794.3"/>
</g>
<g stroke="#1a1100" stroke-width="0.9" stroke-linejoin="round">
<path d="M1334.2 205H1351.4V252.5L1334.2 242.7Z" fill="#b06800"/>
<path d="M1351.4 205H1399.9V265.7L1328.4 305.9V265.7L1351.4 252.5Z" fill="#d88200"/>
<path d="M1399.9 205H1404.8V237L1399.9 242Z" fill="#d88200" stroke="none"/>
<path d="M1287.4 235.3V272C1287.4 280 1292 284 1300 289L1328.4 305.9V265.7L1301.3 249.3C1292 244 1287.4 240 1287.4 235.3Z" fill="url(#oL)"/>
<path d="M1323.5 205H1334.2V242.7L1351.4 252.5L1328.4 265.7L1301.3 249.3C1292 244 1287.4 240 1287.4 233C1287.4 228 1290 223 1296.4 220.5Z" fill="#ffa600"/>
<ellipse cx="1317.8" cy="232.8" rx="9.8" ry="5.7" fill="url(#oH)"/>
<path d="M1404.8 205H1422V292.8L1404.8 283.7Z" fill="#b06800"/>
<path d="M1422 205H1460.5V270.6L1422 292.8Z" fill="#d88200"/>
<path d="M1460.5 205H1471.2V271.5L1460.5 270.6Z" fill="#c47200"/>
<path d="M1471.2 205H1570.6V216.4C1566 242 1530 268 1475 271.5H1471.2Z" fill="url(#oC)"/>
<path d="M1381 296.9L1404.8 283.7L1422 292.8L1460.5 270.6L1471.2 271.5H1475C1530 268 1566 242 1570.6 216.4V205H1649.4L1468 309.5C1458 316 1447 319.9 1436 319.9C1420 319.9 1405 313 1381 296.9Z" fill="#ffa600"/>
<path d="M1381 296.9V337.1L1408 352.5C1418 358 1426 360.1 1436 360.1V319.9C1420 319.9 1405 313 1381 296.9Z" fill="url(#oF)"/>
<path d="M1436 319.9C1447 319.9 1458 316 1468 309.5L1649.4 205H1656V230C1656 238 1651 243 1643.7 247.6L1456 355.5C1450 359 1443 360.1 1436 360.1Z" fill="#d88200"/>
<ellipse cx="1438.5" cy="302.6" rx="9.8" ry="5.7" fill="url(#oH)"/>
</g>
<rect x="1045.5" y="564.5" width="301" height="144.6" fill="none" stroke="#ee9a45" stroke-width="1"/>
<g fill="none" stroke="#1e1e1e" stroke-width="1">
<path d="M1181.5 458.5V515 M1181.5 520V529.7 M1181.5 534.8V591.3 M1181.5 596.7V743" stroke="#111"/>
<path d="M1082.4 564.5V617.8 M1082.4 665.7V709 M1280.5 564.5V617.8 M1280.5 665.7V709" stroke="#333"/>
<path d="M1089.3 614L1161.8 588.4Q1181.3 582.5 1200.8 588.4L1273.9 614A29.9 29.9 0 0 1 1273.9 670.6L1200.8 696.2Q1181.3 702.1 1161.8 696.2L1089.3 670.6A29.9 29.9 0 0 1 1089.3 614Z"/>
<circle cx="1181.3" cy="642.3" r="29.2"/>
<circle cx="1098.9" cy="642.3" r="14.7"/>
<circle cx="1264.3" cy="642.3" r="14.7"/>
<path d="M1068 642.5H1088 M1093 642.5H1103 M1108.7 642.5H1129.4 M1136.2 642.5H1170.6 M1177.5 642.5H1185.6 M1191.2 642.5H1227 M1233 642.5H1254.4 M1259.4 642.5H1268.1 M1273.7 642.5H1294.4" stroke="#111"/>
<path d="M1098.9 611.8V632.5 M1098.9 637.5V647 M1098.9 652.5V673.2 M1264.3 611.8V632.5 M1264.3 637.5V647 M1264.3 652.5V673.2" stroke="#777"/>
</g>
<circle cx="1083.3" cy="534.5" r="11.2" fill="#fff" filter="url(#bsh2)"/><circle cx="1083.3" cy="534.5" r="9" fill="#0000f2"/><text x="1083.3" y="539.0" font-family="Liberation Sans" font-weight="bold" font-size="12.5" fill="#fff" text-anchor="middle">3</text>
<circle cx="1288.2" cy="529.7" r="11.2" fill="#fff" filter="url(#bsh2)"/><circle cx="1288.2" cy="529.7" r="9" fill="#0000f2"/><text x="1288.2" y="534.2" font-family="Liberation Sans" font-weight="bold" font-size="12.5" fill="#fff" text-anchor="middle">4</text>
</svg>
<div class="a" style="left:370px;top:991px;font-size:13.5px;line-height:16px;color:#222">"A3_1"&nbsp; ()</div>
<div class="a" style="left:1624px;top:982px;line-height:40px;color:#e4e4e4;text-shadow:1px 1px 1px rgba(0,0,0,.38),-0.6px -0.6px 0 rgba(255,255,255,.7);white-space:nowrap;z-index:5;-webkit-text-stroke:0"><span style="font-size:34px">CSDN @</span><span style="font-size:37.5px">山涧果子</span></div>
<div class="a" style="left:559px;top:354px;width:322px;height:600px;background:#f0f0f0;border:1px solid #c8c8c8;border-top:none;box-shadow:0 0 2px rgba(0,0,0,.15)"></div>
<div class="a" style="left:559px;top:354px;width:322px;height:24px;background:#03608a"></div>
<svg style="left:565.5px;top:358.5px" width="15" height="15" viewBox="0 0 15 15"><g transform="scale(1.06)"><path d="M7 0.5L8.3 0.7L8.7 2.3L9.9 2.8L11.3 1.9L12.1 2.7L11.2 4.1L11.7 5.3L13.3 5.7V8.3L11.7 8.7L11.2 9.9L12.1 11.3L11.3 12.1L9.9 11.2L8.7 11.7L8.3 13.3H5.7L5.3 11.7L4.1 11.2L2.7 12.1L1.9 11.3L2.8 9.9L2.3 8.7L0.7 8.3V5.7L2.3 5.3L2.8 4.1L1.9 2.7L2.7 1.9L4.1 2.8L5.3 2.3L5.7 0.7Z" fill="#fff"/><circle cx="7" cy="7" r="2.3" fill="#03608a"/><circle cx="7" cy="7" r="1.1" fill="#fff"/></g></svg>
<div class="a" style="left:587px;top:358.5px;font-size:14px;line-height:16px;color:#fff">视图相关编辑</div>
<div class="a" style="left:837.5px;top:357.5px;font-size:17px;font-weight:bold;line-height:19px;color:#fff">?</div>
<svg style="left:858.5px;top:359.5px" width="14" height="14" viewBox="0 0 14 14"><path d="M1 1L13 13 M13 1L1 13" stroke="#fff" stroke-width="1.9"/></svg>
<div class="a" style="left:631px;top:385px;width:178px;height:61px;background:#fff;border:1px solid #dcdcdc"></div>
<div class="a" style="left:639px;top:390px;font-size:13px;line-height:14px;color:#2272a0">添加编辑</div>
<div class="a" style="left:636px;top:410px;width:32px;height:32px;background:#d6e8f0"></div>
<div class="a" style="left:638px;top:412px;width:28px;height:28px;border:1.5px dotted #111"></div>
<svg style="left:0;top:0" width="1920" height="1035" viewBox="0 0 1920 1035"><path d="M641.7 417.7H647.2V433.2H641.7Z" fill="none" stroke="#16168a" stroke-width="1.4"/><path d="M647.2 417.7V433.2" stroke="#ff1a1a" stroke-width="1.4"/><path d="M649 425.5H652.5" stroke="#7a1a8a" stroke-width="1.6"/><path d="M652 422.5L655 425.5L652 428.5Z" fill="#7a1a8a"/><path d="M661.8 417.7H655.8V433.2H661.8" fill="none" stroke="#16168a" stroke-width="1.4"/><path d="M675.7 417.7H681.2V433.2H675.7Z" fill="none" stroke="#16168a" stroke-width="1.4"/><path d="M681.2 417.7V433.2" stroke="#ff1a1a" stroke-width="1.4"/><path d="M683 425.5H686.5" stroke="#7a1a8a" stroke-width="1.6"/><path d="M686 422.5L689 425.5L686 428.5Z" fill="#7a1a8a"/><path d="M695.5 417.7H689.7V433.2H695.5" fill="none" stroke="#16168a" stroke-width="1.4"/><path d="M695.3 418V433" stroke="#ff1a1a" stroke-width="1.4" stroke-dasharray="2 1.5"/><path d="M709.8 417.7H715.2V433.2H709.8Z" fill="none" stroke="#16168a" stroke-width="1.4"/><path d="M717 425.5H720.5" stroke="#7a1a8a" stroke-width="1.6"/><path d="M720 422.5L723 425.5L720 428.5Z" fill="#7a1a8a"/><path d="M723.7 417.7H729.3V433.2H723.7Z" fill="#00e8f0" stroke="#16168a" stroke-width="1.4"/><path d="M743.7 417.7H749.2V433.2H743.7Z" fill="none" stroke="#16168a" stroke-width="1.4"/><path d="M749.2 420V431" stroke="#ff1a1a" stroke-width="1.4"/><path d="M746.5 420.2H752 M746.5 430.6H752" stroke="#1a9a1a" stroke-width="1.2"/><path d="M751 425.5H754.5" stroke="#7a1a8a" stroke-width="1.6"/><path d="M754 422.5L757 425.5L754 428.5Z" fill="#7a1a8a"/><path d="M763.6 417.7H757.8V433.2H763.6" fill="none" stroke="#16168a" stroke-width="1.4"/><path d="M763.4 418V433" stroke="#ff1a1a" stroke-width="1.4" stroke-dasharray="2 1.5"/><g stroke="#b4b4b4" fill="none" stroke-width="1"><rect x="777.7" y="415.8" width="10" height="10.5"/><path d="M777.7 418H787.7"/><rect x="788" y="428" width="10.5" height="8.5"/><path d="M778.3 422L782 418.5 M778.5 425.5L785.5 418.5 M781.8 426L787.5 420.5 M785 426L787.5 423.5 M788.5 432.5L792.5 428.5 M789 436L796.5 428.5 M792.5 436L798.2 430.5 M796 436L798.2 433.8" stroke-width="0.9"/><path d="M779.5 427.5C779.5 430 781 432 785.5 432 M783.5 430L786 432L783.5 434"/></g></svg>
<div class="a" style="left:665px;top:449px;width:110px;height:61px;background:#fff;border:1px solid #dcdcdc"></div>
<svg style="left:0;top:0" width="1920" height="1035" viewBox="0 0 1920 1035"><path d="M681.5 481.8H675.7V497.3H681.5" fill="none" stroke="#16168a" stroke-width="1.4"/><path d="M683 489.5H686.5" stroke="#7a1a8a" stroke-width="1.6"/><path d="M686 486.5L689 489.5L686 492.5Z" fill="#7a1a8a"/><path d="M689.8 481.8H695.2V497.3H689.8Z" fill="none" stroke="#16168a" stroke-width="1.4"/><path d="M695.2 481.8V497.3" stroke="#ff1a1a" stroke-width="1.4"/><path d="M715.3 481.8H709.7V497.3H715.3" fill="none" stroke="#16168a" stroke-width="1.4"/><path d="M715.3 482V497" stroke="#ff1a1a" stroke-width="1.4" stroke-dasharray="2 1.5"/><path d="M717 489.5H720.5" stroke="#7a1a8a" stroke-width="1.6"/><path d="M720 486.5L723 489.5L720 492.5Z" fill="#7a1a8a"/><path d="M723.6 481.8H729V497.3H723.6Z" fill="none" stroke="#16168a" stroke-width="1.4"/><path d="M729 481.8V497.3" stroke="#ff1a1a" stroke-width="1.4"/><path d="M743.6 481.8H749V497.3H743.6Z" fill="none" stroke="#ff1a1a" stroke-width="1.4" stroke-dasharray="2 1.5"/><path d="M751 489.5H754.5" stroke="#7a1a8a" stroke-width="1.6"/><path d="M754 486.5L757 489.5L754 492.5Z" fill="#7a1a8a"/><path d="M757.5 481.8H763.1V497.3H757.5Z" fill="none" stroke="#ff1a1a" stroke-width="1.4"/></svg>
<div class="a" style="left:658px;top:442px;width:64px;height:33px;background:#fff;border:1px solid #a0a0a0"></div>
<div class="a" style="left:665px;top:452px;font-size:13px;line-height:14px;color:#111">擦除对象</div>
<svg style="left:631px;top:443px" width="27" height="27" viewBox="0 0 27 27"><defs><filter id="bsh3" x="-30%" y="-30%" width="160%" height="160%"><feDropShadow dx="0.6" dy="0.9" stdDeviation="1.4" flood-color="#000" flood-opacity="0.9"/></filter></defs><circle cx="13.6" cy="13.2" r="11.3" fill="#fff" filter="url(#bsh3)"/><circle cx="13.6" cy="13.2" r="9.1" fill="#0000f2"/><text x="13.6" y="18" font-family="Liberation Sans" font-weight="bold" font-size="14" fill="#fff" text-anchor="middle">2</text></svg>
<div class="a" style="left:679px;top:513px;width:80px;height:61px;background:#fff;border:1px solid #dcdcdc"></div>
<div class="a" style="left:687px;top:518px;font-size:13px;line-height:14px;color:#2272a0">转换相依性</div>
<svg style="left:0;top:0" width="1920" height="1035" viewBox="0 0 1920 1035"><g transform="translate(690,542)"><path d="M0.5 4.5L5.5 0.5L17 3.5L12 7.5Z" fill="#fff" stroke="#333" stroke-width="0.9"/><path d="M0.5 4.5V8.5L12 12V7.5Z" fill="#fff" stroke="#333" stroke-width="0.9"/><path d="M12 7.5L17 3.5V8L12 12Z" fill="#d8d860" stroke="#111" stroke-width="0.9"/><path d="M5 1.5L10 6" stroke="#ff1a1a" stroke-width="1.1"/><path d="M3 8.5L7 9.5L6 11Z" fill="#f0f040"/></g><rect x="701.3" y="556.3" width="12.5" height="9.5" fill="#fff" stroke="#111" stroke-width="1.2"/><path d="M702.3 557.8L712.8 564.3" stroke="#ff1a1a" stroke-width="1.1"/><path d="M707 543.5C710 543 712.5 545 712 550" fill="none" stroke="#7a1a8a" stroke-width="1.2"/><path d="M709.8 549.5H714.2L712 552.5Z" fill="#7a1a8a"/><rect x="724.5" y="542.6" width="12.5" height="9.5" fill="#fff" stroke="#111" stroke-width="1.2"/><path d="M725.5 544.1L736.0 550.6" stroke="#ff1a1a" stroke-width="1.1"/><g transform="translate(731,553)"><path d="M0.5 4.5L5.5 0.5L17 3.5L12 7.5Z" fill="#fff" stroke="#333" stroke-width="0.9"/><path d="M0.5 4.5V8.5L12 12V7.5Z" fill="#fff" stroke="#333" stroke-width="0.9"/><path d="M12 7.5L17 3.5V8L12 12Z" fill="#d8d860" stroke="#111" stroke-width="0.9"/><path d="M5 1.5L10 6" stroke="#ff1a1a" stroke-width="1.1"/><path d="M3 8.5L7 9.5L6 11Z" fill="#f0f040"/></g><path d="M738 543.5C741 543 743.5 545 743 550" fill="none" stroke="#7a1a8a" stroke-width="1.2"/><path d="M740.8 549.5H745.2L743 552.5Z" fill="#7a1a8a"/></svg>
<div class="a" style="left:569px;top:576px;width:303px;height:116px;background:#fff;border:1px solid #dcdcdc"></div>
<div class="a" style="left:577px;top:582px;font-size:13px;line-height:14px;color:#1f6996">线框编辑</div>
<div class="a" style="left:577px;top:612px;font-size:13px;line-height:14px;color:#a3a3a3;-webkit-text-stroke:0">线条颜色</div>
<div class="a" style="left:762px;top:607px;width:100px;height:21px;background:#9a9a9a;border:1px solid #555"></div>
<div class="a" style="left:764px;top:609px;width:96px;height:17px;border:1px dotted #fff"></div>
<div class="a" style="left:577px;top:637px;font-size:13px;line-height:14px;color:#a3a3a3;-webkit-text-stroke:0">线型</div>
<div class="a" style="left:758px;top:630px;width:104px;height:25px;background:#fff;border:1px solid #d0d0d0"></div>
<div class="a" style="left:843px;top:631px;width:18px;height:23px;background:#f4f4f4"></div>
<div class="a" style="left:764px;top:636px;font-size:13px;line-height:14px;color:#a3a3a3;-webkit-text-stroke:0">原始</div>
<svg style="left:848px;top:641px" width="8" height="4"><path d="M0 0H8L4 4Z" fill="#b0b0b0"/></svg>
<div class="a" style="left:577px;top:663px;font-size:13px;line-height:14px;color:#a3a3a3;-webkit-text-stroke:0">线宽</div>
<div class="a" style="left:743px;top:657px;width:119px;height:26px;background:#f4f4f4;border:1px solid #d0d0d0"></div>
<div class="a" style="left:746px;top:659px;width:70px;height:22px;background:#fff"></div>
<div class="a" style="left:791px;top:663px;font-size:13px;line-height:14px;color:#a3a3a3;-webkit-text-stroke:0">原始</div>
<svg style="left:848px;top:668px" width="8" height="4"><path d="M0 0H8L4 4Z" fill="#b0b0b0"/></svg>
<div class="a" style="left:569px;top:695px;width:303px;height:180px;background:#fff;border:1px solid #dcdcdc"></div>
<div class="a" style="left:577px;top:700px;font-size:13px;line-height:14px;color:#1f6996">着色编辑</div>
<div class="a" style="left:577px;top:729px;font-size:13px;line-height:14px;color:#a3a3a3;-webkit-text-stroke:0">着色颜色</div>
<div class="a" style="left:762px;top:725px;width:100px;height:21px;background:#9a9a9a;border:1px solid #555"></div>
<div class="a" style="left:764px;top:727px;width:96px;height:17px;border:1px dotted #fff"></div>
<div class="a" style="left:577px;top:754px;font-size:13px;line-height:14px;color:#a3a3a3;-webkit-text-stroke:0">局部着色</div>
<div class="a" style="left:799px;top:748px;width:63px;height:25px;background:#f4f4f4;border:1px solid #d0d0d0"></div>
<div class="a" style="left:803px;top:754px;font-size:13px;line-height:14px;color:#a3a3a3;-webkit-text-stroke:0">无更改</div>
<svg style="left:848px;top:759px" width="8" height="4"><path d="M0 0H8L4 4Z" fill="#b0b0b0"/></svg>
<div class="a" style="left:577px;top:781px;font-size:13px;line-height:14px;color:#a3a3a3;-webkit-text-stroke:0">透明度</div>
<div class="a" style="left:799px;top:775px;width:63px;height:25px;background:#f4f4f4;border:1px solid #d0d0d0"></div>
<div class="a" style="left:803px;top:781px;font-size:13px;line-height:14px;color:#a3a3a3;-webkit-text-stroke:0">无更改</div>
<svg style="left:848px;top:786px" width="8" height="4"><path d="M0 0H8L4 4Z" fill="#b0b0b0"/></svg>
<div class="a" style="left:587px;top:805px;font-size:13px;line-height:14px;color:#a3a3a3;-webkit-text-stroke:0">0</div>
<div class="a" style="left:585px;top:832px;width:270px;height:4px;background:#c4c4c4"></div>
<div class="a" style="left:585px;top:824px;width:9px;height:19px;background:#c4c4c4"></div>
<div class="a" style="left:583px;top:849px;font-size:13px;line-height:14px;color:#a3a3a3;-webkit-text-stroke:0">0</div>
<div class="a" style="left:841px;top:849px;font-size:13px;line-height:14px;color:#a3a3a3;-webkit-text-stroke:0">100</div>
<div class="a" style="left:569px;top:877px;width:302px;height:29px;background:#f0f0f0;border:1px solid #7a7a7a"></div>
<div class="a" style="left:708px;top:886px;font-size:13px;line-height:14px;color:#111">重置</div>
<div class="a" style="left:693px;top:918px;width:54px;height:25px;background:#f0f0f0;border:1px solid #0b5e86"></div>
<div class="a" style="left:708px;top:924.5px;font-size:13px;line-height:14px;color:#111">确定</div>
<div class="a" style="left:752px;top:918px;width:54px;height:25px;background:#f0f0f0;border:1px solid #cccccc"></div>
<div class="a" style="left:767px;top:924.5px;font-size:13px;line-height:14px;color:#a8a8a8;-webkit-text-stroke:0">应用</div>
<div class="a" style="left:811px;top:918px;width:54px;height:25px;background:#f0f0f0;border:1px solid #0b5e86"></div>
<div class="a" style="left:824.5px;top:924.5px;font-size:13px;line-height:14px;color:#111">取消</div>
<div id="status" class="a"></div>
<div class="a" style="left:3px;top:1014px;font-size:11.1px;line-height:14px;color:#111">选择编辑当前视图的选项或选择另一个视图</div>
<div class="a" style="left:0;top:1032px;width:1920px;height:3px;background:#cfe6ea"></div>

</body></html>
